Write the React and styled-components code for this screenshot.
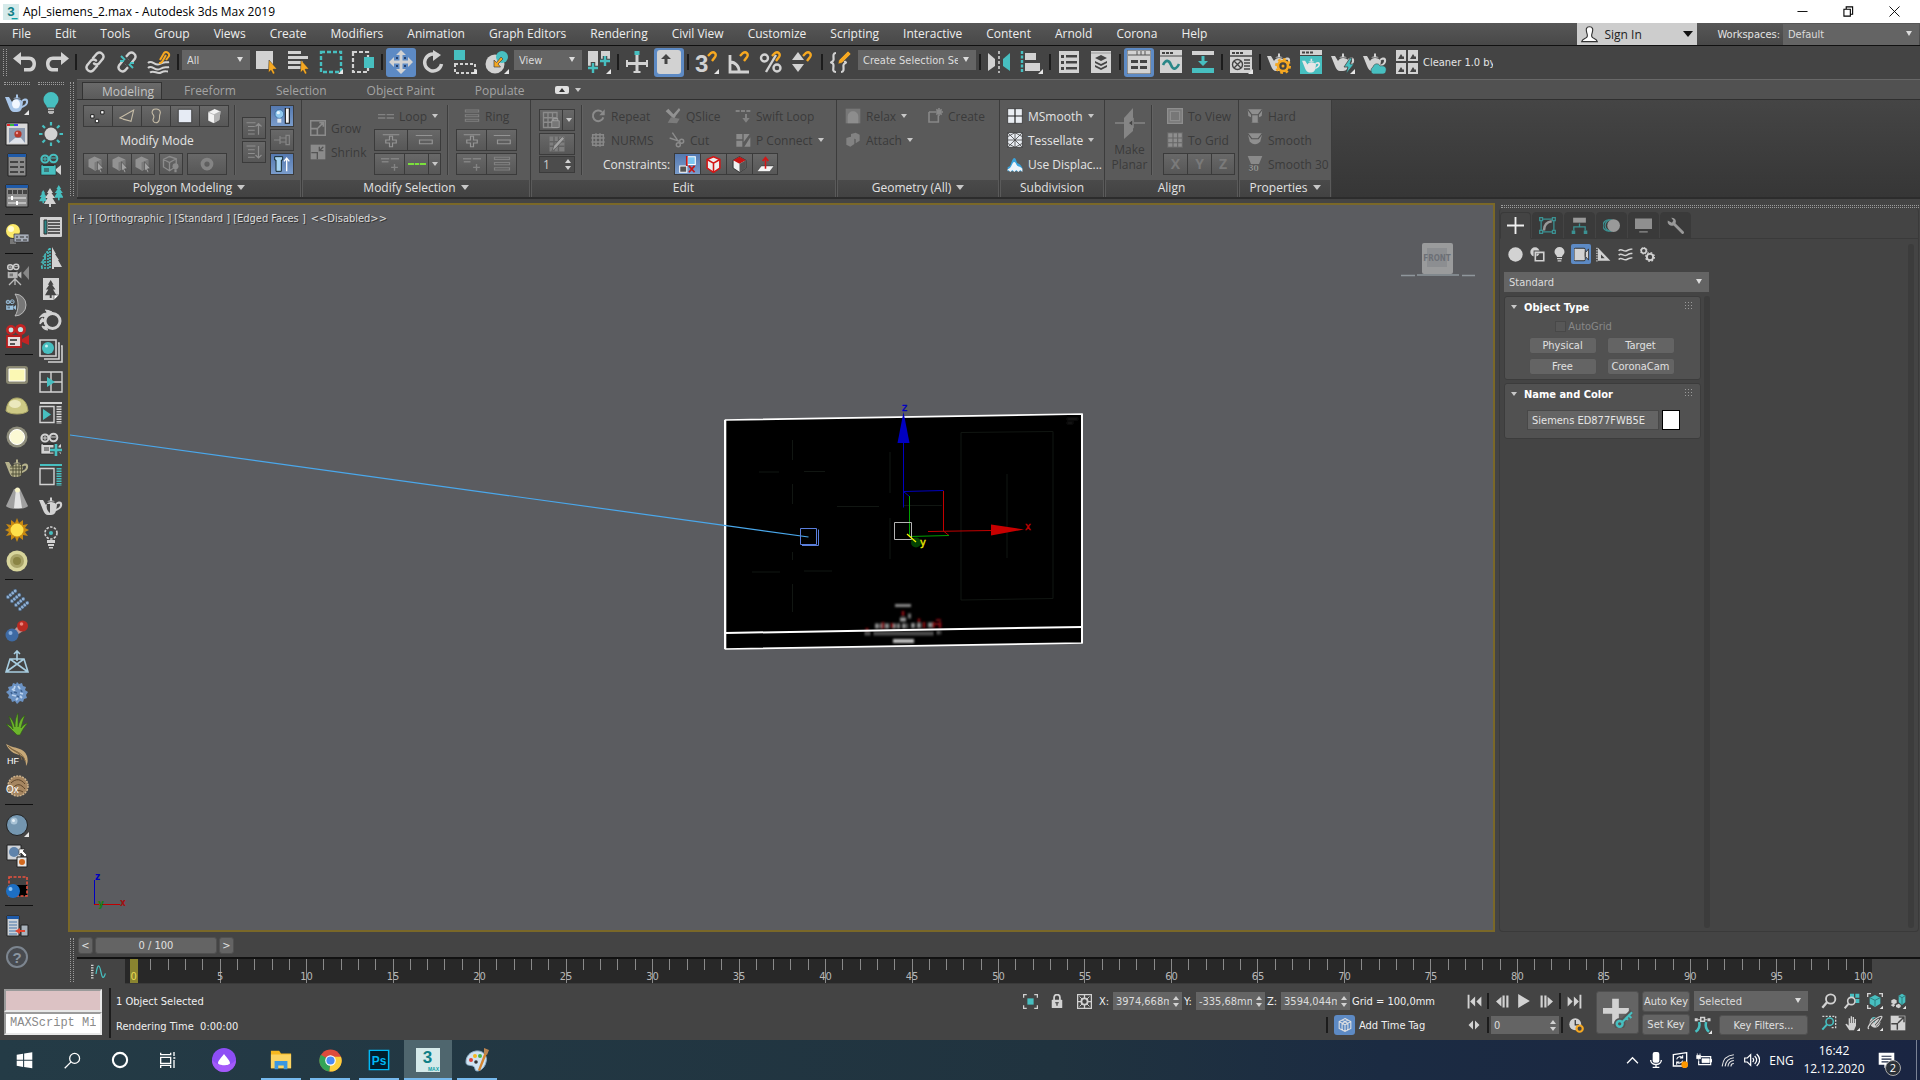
import React from 'react';
import styled, { createGlobalStyle, css } from 'styled-components';

const segoe = "'Open Sans', 'Noto Sans', sans-serif";
const tahoma = "'DejaVu Sans Condensed', 'Noto Sans', sans-serif";

const L = '#d2d2d2';
const T = '#47bfc0';
const Y = '#f6a821';
const D = '#444444';
const G = '#8b8b8b';
const B = '#5d8ac4';

const GlobalStyle = createGlobalStyle`
	* { box-sizing: border-box; }
	body {
		margin: 0;
		background: #444444;
		color: #e4e4e4;
		font: 11px ${tahoma};
	}
	button, input, select {
		font: inherit;
		color: inherit;
		margin: 0;
		padding: 0;
		border: 0;
		background: none;
		border-radius: 0;
	}
	svg { display: block; flex: none; }
`;

/* ---------- icon drawings, 24 x 24 ---------- */

const magnet = (x, y) => (
	<path d={`M${x} ${y + 4}l3-3c3-2 6 1 4 4l-3 4`} fill='none' stroke={Y} strokeWidth='2.4' />
);
const corner = <path d='M24 19v5h-5z' fill='#e6e6e6' />;
const cursor = (x, y) => (
	<path d={`M${x} ${y}l8 9-4 .3 2 4-2 1-2-4-2.6 2.5z`} fill={Y} stroke='#333' strokeWidth='.5' />
);
const teapot = (c) => (
	<g fill={c}>
		<path d='M0 6h4l3 5c1-2 3-3 5-3s5 1 6 3l-1 6c-1 3-3 4-5 4H9c-2 0-4-2-5-5z' />
		<path d='M17 9c4-3 7-1 6 3-1 3-4 4-6 5l0-2c2-1 4-2 4-4s-2-1-4 0z' />
		<path d='M8 7.500c1-1.500 7-1.500 8 0zM11 3.500h2v3h-2z' />
	</g>
);
const camera = (a, b, lens) => (
	<g>
		<circle cx='6' cy='6' r='3.6' fill='none' stroke={b} strokeWidth='2' />
		<circle cx='14.5' cy='5.5' r='3.8' fill='none' stroke={b} strokeWidth='2' />
		<path d='M3 6h6M12 5h5M6 4v4' stroke={b} strokeWidth='1' />
		<path d='M2 12h15v10H2z' fill={a} stroke='#222' strokeWidth='.6' />
		<path d='M4 11h11v2H4z' fill='#333' />
		<path d='M5 15h5v4H5z' fill='#333' opacity='.5' />
		<path d='M17 16l5-4v10l-5-4z' fill={lens} />
	</g>
);
const chain = (c) => (
	<g fill='none' stroke={c} strokeWidth='2.4' strokeLinecap='round'>
		<path d='M10 8l4-4.500a4 4 0 0 1 6 5l-4 5a4 4 0 0 1-5 0' />
		<path d='M14 16l-4 4.500a4 4 0 0 1-6-5l4-5a4 4 0 0 1 5 0' />
	</g>
);
const tree = (x, y, s, c) => (
	<path
		transform={`translate(${x} ${y}) scale(${s})`}
		d='M6 0l3 5H7.500l3.500 5H8.500l3.500 6H7v3H5v-3H0l3.500-6H1l3.500-5H3z'
		fill={c}
	/>
);

const icons = {
	undo: (
		<path d='M0 8.500L8 2v4.500h8c4.500 0 7 3 7 7s-2 8-6 8h-6v-3.500h5c2 0 3.500-2 3.500-4s-1.500-4-3.500-4H8V15z' fill={L} />
	),
	redo: (
		<path d='M24 8.500L16 2v4.500H8c-4.500 0-7 3-7 7s2 8 6 8h6v-3.500H8c-2 0-3.500-2-3.500-4s1.500-4 3.500-4h8V15z' fill={L} />
	),
	link: chain(L),
	unlink: (
		<g>
			{chain(L)}
			<path d='M7 7l10 10' stroke={D} strokeWidth='6' />
			<path d='M6 6l4 4M14 14l4 4M5 11h4M15 13h4' stroke={T} strokeWidth='2' />
		</g>
	),
	bind: (
		<g fill='none' strokeWidth='2'>
			<path d='M1 13c4-4 7 4 12 1s6-1 9-2M1 18c4-4 7 4 12 1s6-1 9-2M3 22.500c4-3 7 2 11 0s5-1 7-1' stroke={L} />
			<path d='M13 10l4-7a3 3 0 0 1 5 3l-3 4M19 5l-4 7a3 3 0 0 1-3 1' stroke={Y} />
		</g>
	),
	select: (
		<g>
			<path d='M1 1h17v18H1z' fill={L} />
			{cursor(14, 10)}
		</g>
	),
	byName: (
		<g>
			<path d='M1 1h13v3H1zM1 6h20v3H1zM1 11h15v3H1zM1 16h13v3H1z' fill={L} />
			{cursor(14, 10)}
		</g>
	),
	rectRegion: (
		<g>
			<path d='M2 2h20v20H2z' fill='none' stroke={T} strokeWidth='2.4' strokeDasharray='4 2' />
			{corner}
		</g>
	),
	crossing: (
		<g>
			<path d='M2 2h15v20H2z' fill='none' stroke={L} strokeWidth='2.2' strokeDasharray='4 2' />
			<path d='M13 7h10v11H13z' fill={T} />
		</g>
	),
	move: (
		<g fill={L}>
			<path d='M12 0l5 5h-3.500v5.500H19V7l5 5-5 5v-3.500h-5.500V19H17l-5 5-5-5h3.500v-5.500H5V17l-5-5 5-5v3.500h5.500V5H7z' />
			<path d='M7 7h2v2H7zM15 7h2v2h-2zM7 15h2v2H7zM15 15h2v2h-2z' fill='#27406b' />
		</g>
	),
	rotate: (
		<g>
			<path d='M17 5.500A8.500 8.500 0 1 0 20.500 14' fill='none' stroke={L} strokeWidth='3.400' />
			<path d='M12 0l8 5-8 6z' fill={L} />
		</g>
	),
	scale: (
		<g>
			<path d='M1 0h11v10H1z' fill={T} />
			<path d='M2 14h20v9H2z' fill='none' stroke={L} strokeWidth='2' strokeDasharray='3 2' />
			{corner}
		</g>
	),
	place: (
		<g>
			<circle cx='10' cy='14' r='9.500' fill={L} />
			<circle cx='17' cy='7' r='6' fill={T} />
			<path d='M9 17v-7l2.500 2.500L16 7l2 2-5 5 2.500 3z' fill={Y} stroke='#444' strokeWidth='.7' />
			{corner}
		</g>
	),
	pivot: (
		<g>
			<path d='M1 1h10v15H1zM14 1h9v12h-9z' fill={L} />
			<path d='M6 12v12M1 18h10M18 6v10M13 11h10' stroke={D} strokeWidth='4.500' />
			<path d='M6 13v10M1 18h10M18 6v10M13 11h10' stroke={T} strokeWidth='2.400' />
			{corner}
		</g>
	),
	manipulate: (
		<g>
			<path d='M10.500 5h3v7H23v3h-9.500v8h-3v-8H1v-3h9.500z' fill={L} />
			<path d='M9.500 1h5v4h-5z' fill={T} />
			<path d='M1 10h2v7H1zM21 10h2v7h-2zM8.500 21h7v2h-7z' fill={L} />
		</g>
	),
	keyboard: (
		<g>
			<rect x='0' y='0' width='24' height='24' rx='3' fill={L} />
			<path d='M9 4l5 5h-3.500v5h-3V9H4z' fill='#444' />
		</g>
	),
	snap: (
		<g>
			<text x='0' y='22' fontSize='24' fontWeight='600' fontFamily='Liberation Sans, sans-serif' fill={L}>3</text>
			{magnet(13, 2)}
			{corner}
		</g>
	),
	angle: (
		<g>
			<path d='M3 5v17h19M3 12a9 9 0 0 1 9 10' fill='none' stroke={L} strokeWidth='2.800' />
			{magnet(13, 2)}
		</g>
	),
	percent: (
		<g>
			<circle cx='5.500' cy='8' r='3.500' fill='none' stroke={L} strokeWidth='2.400' />
			<circle cx='18' cy='18' r='3.500' fill='none' stroke={L} strokeWidth='2.400' />
			<path d='M17 5L7 22' stroke={L} strokeWidth='2.400' />
			{magnet(13, 2)}
		</g>
	),
	spinner: (
		<g>
			<path d='M1 10l6-8 6 8zM1 14l6 8 6-8z' fill={L} />
			{magnet(12, 2)}
		</g>
	),
	braces: (
		<g>
			<path d='M7 3C3 3 5 8 4.500 10S2 12 2 12.500s2.500 0 2.500 3S3 22 7 22M12 22c4 0 2-5 2.500-7S17 13 17 12.500s-2-1-2-2' fill='none' stroke={L} strokeWidth='2.200' />
			<path d='M9 14l1-4 9-9 3 3-9 9z' fill={Y} stroke='#444' strokeWidth='.6' />
		</g>
	),
	mirror: (
		<g>
			<path d='M1 3l7 6v7l-7 5z' fill={L} />
			<path d='M23 3l-7 6v7l7 5z' fill={T} />
			<path d='M12 1v22' stroke={L} strokeWidth='1.600' strokeDasharray='3 2' />
		</g>
	),
	align: (
		<g>
			<path d='M3 1v22' stroke={T} strokeWidth='2.400' strokeDasharray='3 1.500' />
			<path d='M6 3h11v7H6zM6 13h15v8H6z' fill={L} />
			{corner}
		</g>
	),
	explorer: (
		<g>
			<path d='M2 1h20v22H2z' fill={L} />
			<path d='M4 5h3v3H4zM4 11h3v3H4zM4 17h3v3H4zM9 5h11v2.500H9zM9 11h11v2.500H9zM9 17h11v2.500H9z' fill={D} />
		</g>
	),
	layers: (
		<g>
			<path d='M2 1h20v22H2z' fill={L} />
			<path d='M12 5l6 3-6 3-6-3zM6 11l6 3 6-3v2l-6 3-6-3zM6 15l6 3 6-3v2l-6 3-6-3z' fill={D} />
			<path d='M2 3h20' stroke='#999' />
		</g>
	),
	ribbon: (
		<g>
			<path d='M0 0h24v24H0z' fill={L} stroke='#555' />
			<path d='M1 5h22M10 1v4M14 1v4M18 1v4' stroke='#555' />
			<path d='M4 10h7v3H4zM13 10h7v3h-7zM4 16h7v3H4zM13 16h7v3h-7z' fill={D} />
		</g>
	),
	curve: (
		<g>
			<path d='M1 0h22v23H1z' fill={L} />
			<path d='M3 2h3v2H3zM7 2h3v2H7zM11 2h3v2h-3z' fill={D} />
			<path d='M1 6h22' stroke={D} />
			<path d='M4 15c3-6 6-5 8 0s5 5 8-1' fill='none' stroke='#2a8788' strokeWidth='2.600' />
		</g>
	),
	schematic: (
		<g>
			<path d='M1 1h22v4H1z' fill={L} />
			<path d='M1 18h22v5H1zM10.500 6h3v5H17l-5 5-5-5h3.500z' fill={T} />
		</g>
	),
	material: (
		<g>
			<path d='M1 0h22v23H1z' fill={L} />
			<path d='M3 2h3v2H3zM7 2h3v2H7zM11 2h3v2h-3z' fill={D} />
			<path d='M1 6h22M15 10h6M15 13h6M15 16h6M15 19h6' stroke={D} strokeWidth='1.400' />
			<circle cx='8.500' cy='14.500' r='5' fill='none' stroke={D} strokeWidth='1.400' />
			<path d='M5 11l7 7M12 11l-7 7' stroke={D} strokeWidth='1.400' />
			{corner}
		</g>
	),
	renderSetup: (
		<g>
			{teapot(L)}
			<circle cx='16' cy='16' r='5' fill={D} stroke={Y} strokeWidth='2.600' />
			<circle cx='16' cy='16' r='7' fill='none' stroke={Y} strokeWidth='2' strokeDasharray='2.750 2.750' />
			<circle cx='16' cy='16' r='1.500' fill={Y} />
		</g>
	),
	renderFrame: (
		<g>
			<path d='M1 0h22v5H1z' fill={L} />
			<path d='M3 1.500h3v2H3zM7 1.500h3v2H7zM11 1.500h3v2h-3z' fill={D} />
			<path d='M1 6h22v18H1z' fill={T} />
			<g transform='translate(3 6) scale(.78)'>{teapot('#e6e6e6')}</g>
		</g>
	),
	renderProd: (
		<g>
			{teapot(L)}
			<path d='M19 8l-6 9h4l-2 7 8-10h-4l2-6z' fill={T} stroke={D} strokeWidth='.8' />
			{corner}
		</g>
	),
	renderCloud: (
		<g>
			{teapot(L)}
			<path d='M10 24a4 4 0 0 1 0-7c1-4 6-4 7-1 5-1 7 2 6 5 0 2-2 3-3 3z' fill={T} stroke={D} strokeWidth='.6' />
		</g>
	),
	gallery: (
		<g>
			<path d='M1 0h10v11H1zM13 0h10v11H13zM1 13h10v11H1zM13 13h10v11H13z' fill={L} />
			<path d='M3 9l3-5 2 3 1-1v3zM15 9l3-5 2 3 1-1v3zM3 22l3-5 2 3 1-1v3zM15 22l3-5 2 3 1-1v3z' fill={D} />
		</g>
	),

	/* left dock, first column */
	teapotBlue: (
		<g>
			{teapot('#a9c6e8')}
			<ellipse cx='11' cy='13' rx='4' ry='4.500' fill='#f2f7ff' />
			{corner}
		</g>
	),
	vfb: (
		<g>
			<path d='M1 1h22v22H1z' fill='#d9d9d9' stroke='#222' />
			<path d='M2 2h3v2H2z' fill='#d22' /><path d='M5 2h4v2H5z' fill='#3b4' /><path d='M9 2h4v2H9z' fill='#44e' />
			<path d='M4 6h16v15H4z' fill='#8d9bb0' />
			<path d='M4 21l6-5h6l4 5z' fill='#dfe3ea' />
			<circle cx='13' cy='12' r='3.600' fill='#b5392b' />
			<circle cx='12' cy='11' r='1.200' fill='#e99' />
		</g>
	),
	dialog: (
		<g>
			<path d='M3 1h18v22H3z' fill='#8c8c8c' stroke='#222' />
			<path d='M3 1h18v3H3z' fill='#1f5aa8' />
			<path d='M5 8h8v2H5zM5 13h8v2H5zM5 18h8v2H5zM15 8h4v2h-4zM15 13h4v2h-4zM15 18h4v2h-4z' fill='#444' />
		</g>
	),
	mixer: (
		<g>
			<path d='M1 1h22v22H1z' fill='#8c8c8c' stroke='#222' />
			<path d='M1 1h22v3H1z' fill='#1f5aa8' />
			<path d='M3 6h4v4H3zM8 6h4v4H8zM13 6h4v4h-4zM18 6h4v4h-4z' fill='#444' />
			<path d='M3 14h18M3 19h18' stroke='#eee' />
			<path d='M7 12v4M12 17v4' stroke='#fff' strokeWidth='2' />
		</g>
	),
	lightLister: (
		<g>
			<circle cx='8' cy='8' r='7' fill='#fbe96a' />
			<circle cx='6' cy='6' r='3' fill='#fffbd0' />
			<path d='M5 16h6v5H5z' fill='#777' />
			<path d='M9 11h15v8H9z' fill='#a6adb8' stroke='#333' strokeWidth='.7' />
			<path d='M11 14h2M15 14h4M21 14h2M11 17h5M18 17h4' stroke='#333' />
		</g>
	),
	cameraGrey: (
		<g>
			<g transform='translate(1 1) scale(.7)'>{camera('#b8b8b8', '#ccc', '#b8b8b8')}</g>
			<path d='M24 4v14l-6-7z' fill='#888' />
			<path d='M4 23l6-6 6 6M10 16v7' fill='none' stroke='#bbb' strokeWidth='1.300' />
		</g>
	),
	cameraHalf: (
		<g>
			<path d='M10 1a11 11 0 1 1 0 22c4-6 4-16 0-22z' fill='#777' stroke='#ccc' strokeWidth='.8' />
			<g transform='translate(0 6) scale(.5)'>{camera('#9cc3e0', '#9cc3e0', '#9cc3e0')}</g>
		</g>
	),
	cameraRed: (
		<g>
			<circle cx='6' cy='6' r='5' fill='#c22424' />
			<circle cx='15.500' cy='5.500' r='5.500' fill='#c22424' />
			<circle cx='6' cy='6' r='2.400' fill='#bfe6e6' />
			<circle cx='15.500' cy='5.500' r='2.600' fill='#bfe6e6' />
			<path d='M2 12h14v11H2z' fill='#e6dada' stroke='#b51d1d' strokeWidth='1.800' />
			<path d='M5 15h7v2H5zM5 19h5v2H5z' fill='#555' />
			<path d='M17 15l7-4v10l-7-3z' fill='#c22424' />
		</g>
	),
	lightRect: (
		<g>
			<rect x='1' y='3' width='22' height='18' rx='3' fill='#8a8872' />
			<path d='M4 6h16v12H4z' fill='#fbf8b4' stroke='#fff' />
		</g>
	),
	lightDome: (
		<g>
			<path d='M1 17C2 7 7 4 12 4s10 3 11 13c-4 4-18 4-22 0z' fill='#cdc985' stroke='#a9a566' />
			<ellipse cx='10' cy='10' rx='6' ry='4' fill='#ebe8bd' />
		</g>
	),
	lightSphere: (
		<g>
			<circle cx='12' cy='12' r='10.500' fill='#8f8e7d' />
			<circle cx='12' cy='12' r='7.500' fill='#fbf9d4' stroke='#fff' />
		</g>
	),
	teapotMesh: (
		<g>
			{teapot('#b6b28c')}
			<path d='M5 11h13M5 14h13M6 18h11M8 8v13M11 8v13M14 8v13M16.500 9v10' stroke='#4b4933' strokeWidth='.9' />
		</g>
	),
	lightSpot: (
		<g>
			<path d='M9 2h6l8 17c-3 4-19 4-22 0z' fill='#a0a0a0' />
			<path d='M11 2h3l3 19H9z' fill='#e4e4e4' />
			<circle cx='12.500' cy='3' r='2.500' fill='#f8f4c8' />
		</g>
	),
	sunYellow: (
		<g>
			<path d='M12 0l2 5 4-3v5l5-1-3 4 4 2-4 2 3 4-5-1v5l-4-3-2 5-2-5-4 3v-5l-5 1 3-4-4-2 4-2-3-4 5 1V2l4 3z' fill='#c88a12' />
			<circle cx='12' cy='12' r='6.500' fill='#ffe14a' />
		</g>
	),
	halo: (
		<g>
			<circle cx='12' cy='12' r='10.500' fill='#d8d59c' />
			<circle cx='12' cy='12' r='7' fill='#a9a469' />
			<circle cx='12' cy='12' r='4' fill='#8a8444' />
		</g>
	),
	particles: (
		<g fill='#8fb0d4' stroke='#33475e' strokeWidth='.6'>
			{[0, 1, 2, 3].map((r) =>
				[0, 1, 2, 3].map((c) => (
					<circle key={`${r}${c}`} cx={3 + c * 4 + r * 2.400} cy={9 + c * 4 - r * 2} r='1.900' />
				))
			)}
		</g>
	),
	metaballs: (
		<g>
			<path d='M8 12l8-8 5 6-9 6z' fill='#b99' />
			<circle cx='7' cy='16' r='6.500' fill='#3e6aa3' />
			<circle cx='5.500' cy='14' r='2' fill='#8db2df' />
			<circle cx='17.500' cy='7' r='5.500' fill='#b92b23' />
			<circle cx='16.500' cy='5' r='1.800' fill='#ec8279' />
		</g>
	),
	lattice: (
		<path d='M12 11V1m-3 3l3-3 3 3M5 9h14l4 13H1zM5 9l18 13M19 9L1 22' fill='none' stroke='#a8cde0' strokeWidth='1.600' />
	),
	fur: (
		<g>
			<path d='M12 1l2 2 3-1 1 3 3 1-1 3 3 2-2 3 1 3-3 1-1 3-3-1-3 3-2-3-3 1-1-3-3-1 1-3-3-3 3-2-1-3 4-1 1-3 3 1z' fill='#6c93c4' />
			<path d='M7 8l3 2M13 5l2 3M7 14l4 1M15 12l3 1M11 19l2-2M10 5l-1 3M17 17l-2-2' stroke='#bcd3ee' strokeWidth='1.800' />
			<path d='M9 11l3 1M16 9l1 2M12 15l2 1M6 11l1 2' stroke='#3d618f' strokeWidth='1.600' />
		</g>
	),
	grass: (
		<path d='M12 23C8 19 4 15 1 12c4 1 6 3 7 5C7 12 5 8 4 4c3 3 5 7 6 11C10 9 11 4 13 1c0 5 0 9 0 14 1-5 3-9 7-12-2 5-3 9-4 13 2-3 4-4 7-5-4 4-6 8-8 12z' fill='#6cb52c' stroke='#2f5a14' strokeWidth='.6' />
	),
	hair: (
		<g>
			<path d='M1 1c8 5 18 3 21 12 1 4 1 7-1 10 0-7-2-9-6-11C9 11 4 8 1 1z' fill='#c7a877' />
			<path d='M4 4c6 5 14 5 16 14M3 3c8 8 12 5 14 14' fill='none' stroke='#7d6440' />
			<text x='2' y='21' fontSize='9' fontFamily='Liberation Sans, sans-serif' fill='#fff'>HF</text>
		</g>
	),
	ornatrix: (
		<g>
			<circle cx='13' cy='12' r='10' fill='#a58560' stroke='#d0b48c' strokeWidth='1.500' strokeDasharray='2 1' />
			<path d='M6 9c5-5 10-4 14 1M8 14c4-5 8-4 12 1M10 18c2-2 5-2 8 0' fill='none' stroke='#5d452c' />
			<text x='1' y='19' fontSize='10' fontFamily='Liberation Sans, sans-serif' fill='#fff'>Ox</text>
		</g>
	),
	sphere: (
		<g>
			<circle cx='12' cy='12' r='10.500' fill='#7496b0' stroke='#222' />
			<circle cx='9' cy='8' r='3.500' fill='#a9c3d6' />
			<circle cx='8.500' cy='7.500' r='1.500' fill='#e6f0f7' />
			{corner}
		</g>
	),
	matConvert: (
		<g>
			<path d='M2 1h14v15H2z' fill='#cfd3d8' stroke='#222' />
			<circle cx='9' cy='8' r='5' fill='#5f83ab' />
			<path d='M12 13h10v10H12z' fill='#e6e6e6' stroke='#222' />
			<circle cx='17' cy='18' r='3' fill='#d2691e' />
			<path d='M14 5h6l-2 2 4 4-2 2-4-4-2 2z' fill='#fff' stroke='#222' strokeWidth='.6' />
		</g>
	),
	regionSphere: (
		<g>
			<path d='M11 10h11v11H11z' fill='#000' />
			<path d='M4 2h18v19H4z' fill='none' stroke='#e8523f' strokeWidth='1.600' strokeDasharray='3 1.500' />
			<circle cx='8' cy='16' r='7' fill='#1d6fc4' />
			<circle cx='5.500' cy='14' r='2' fill='#8cc2f2' />
		</g>
	),
	transfer: (
		<g>
			<path d='M2 2h12v20H2z' fill='#ccd2d8' stroke='#222' />
			<path d='M2 2h12v3H2z' fill='#1f5aa8' />
			<path d='M4 8h8M4 11h8M4 14h8M4 17h8M4 20h8' stroke='#4774a8' />
			<path d='M16 11h7v11h-7z' fill='#aab4be' stroke='#222' />
			<path d='M10 17l5-3v2h5v2h-5v2z' fill='#e2452f' />
		</g>
	),
	help: (
		<g>
			<circle cx='12' cy='12' r='10' fill='#484b50' stroke='#7c858f' strokeWidth='2' />
			<text x='12' y='17.500' fontSize='15' fontWeight='bold' textAnchor='middle' fontFamily='Liberation Sans, sans-serif' fill='#8a95a0'>?</text>
		</g>
	),

	/* left dock, second column */
	bulb: (
		<g>
			<path d='M12 1a7.500 7.500 0 0 1 7.500 7.500c0 4-3 5-3.500 8H8c-.5-3-3.500-4-3.500-8A7.500 7.500 0 0 1 12 1z' fill={T} />
			<path d='M9 17.500h6v4l-1.500 1.500h-3L9 21.500z' fill='#b8b8b8' />
			<path d='M9 19.500h6' stroke='#555' />
		</g>
	),
	sun: (
		<g>
			<circle cx='12' cy='12' r='6.500' fill={L} />
			<path d='M12 0v3.500M12 20.500V24M0 12h3.500M20.500 12H24M3.500 3.500L6 6M18 18l2.500 2.500M20.500 3.500L18 6M6 18l-2.500 2.500' stroke={T} strokeWidth='2.200' />
		</g>
	),
	cameraTeal: camera(T, T, L),
	trees: (
		<g>
			{tree(0, 6, 0.7, T)}
			{tree(15, 1, 0.8, T)}
			{tree(5, 4, 1, L)}
		</g>
	),
	lister: (
		<g>
			<rect x='1' y='2' width='22' height='20' rx='1' fill={L} />
			<path d='M5 5h3v14H5z' fill='#2a8788' stroke='#333' />
			<path d='M9 6h12M9 9h12M9 12h12M9 15h12M9 18h12' stroke='#333' strokeWidth='1.600' />
		</g>
	),
	treeHalf: (
		<g>
			<path d='M11 2v20H2l3-6H3l4-6H5z' fill='none' stroke={T} strokeWidth='1.600' strokeDasharray='2 1' />
			<path d='M9 6v14M6 12v8' fill='none' stroke={T} strokeWidth='1.600' strokeDasharray='2 1' />
			<path d='M13 1l4 7h-1l4 6h-1l4 7h-8v2h-2z' fill={L} />
		</g>
	),
	treeCard: (
		<g>
			<path d='M4 1h16v17l-5 5H4z' fill={L} />
			{tree(6, 3, 0.95, D)}
			<path d='M15 23v-5h5z' fill='#fff' stroke={D} strokeWidth='.6' />
		</g>
	),
	ringSplash: (
		<g>
			<circle cx='13.500' cy='13' r='7.500' fill='none' stroke={L} strokeWidth='3' />
			<path d='M7 9C5 8 3 8 1 9c2-3 4-4 7-4 0-2-1-3-2-3 3 0 5 1 7 2M6 13c-2 0-4 1-5 3 0-3 1-5 3-6M8 18c-2 1-4 1-5 0 1 2 3 4 6 4' fill={L} stroke={L} strokeWidth='1.200' />
		</g>
	),
	sphereStack: (
		<g>
			<path d='M1 1h16v16H1z' fill={D} stroke={L} strokeWidth='1.600' />
			<path d='M19 4h1v16H5M22 7h1v16H9' fill='none' stroke={L} strokeWidth='1.600' />
			<circle cx='9' cy='9' r='6' fill={T} />
			<circle cx='7.500' cy='7' r='1.500' fill='#c5f0f0' />
		</g>
	),
	gridPlay: (
		<g>
			<path d='M1 2h22v20H1zM12 2v20M1 12h22' fill='none' stroke={L} strokeWidth='1.400' />
			<path d='M8 7l8 5-8 5z' fill={T} />
		</g>
	),
	panelPlay: (
		<g>
			<path d='M1 2h22' stroke={L} strokeWidth='2' />
			<path d='M1 5.500h14v16H1z' fill='none' stroke={L} strokeWidth='1.400' />
			<path d='M4 8l8 5.500L4 19z' fill={T} />
			<path d='M20 5v18' stroke={L} strokeWidth='5' strokeDasharray='1.500 1' />
		</g>
	),
	cameraPlus: (
		<g>
			{camera(L, L, L)}
			<path d='M17 12v12M11 18h12' stroke={D} strokeWidth='5' />
			<path d='M17 12v12M11 18h12' stroke={T} strokeWidth='2.600' />
		</g>
	),
	panel: (
		<g>
			<path d='M1 2h22' stroke={T} strokeWidth='2' />
			<path d='M1 5.500h14v16H1z' fill='none' stroke={L} strokeWidth='1.400' />
			<path d='M20 5v18' stroke={T} strokeWidth='5' strokeDasharray='1.500 1' />
		</g>
	),
	teapotHalf: (
		<g>
			{teapot(L)}
			<path d='M11 10H8c-1 3 0 7 3 9z' fill={D} />
		</g>
	),
	bulbDots: (
		<g>
			<circle cx='12' cy='8' r='6' fill='none' stroke={L} strokeWidth='1.600' strokeDasharray='2.500 1.300' />
			<circle cx='12' cy='8' r='2' fill={T} />
			<path d='M8 15h8v3H8zM9 19h6v2H9zM10 22h4v1.500h-4z' fill={L} />
		</g>
	),

	/* ribbon */
	vertex: <path d='M1 10h5v5H1zM16 4h5v5h-5zM8 17h5v5H8z' fill='#fff' stroke='#222' strokeWidth='1.500' />,
	edge: <path d='M1 15L22 3l-4 17zM6 17l12 3' fill='none' stroke='#c8bea8' strokeWidth='1.600' />,
	border: <path d='M9 2c6-2 11 2 9 7s1 9-3 12-9-1-7-5 1-4-1-7 0-6 2-7z' fill='none' stroke='#c8bea8' strokeWidth='1.600' />,
	polygon: <path d='M2 2h20v20H2z' fill='#e6ebf4' stroke='#222' />,
	element: (
		<g>
			<path d='M13 1l9 4-2 13-9 5-8-4V6z' fill='#f2f2f2' stroke='#444' strokeWidth='.6' />
			<path d='M12 10v13l8-5 2-13z' fill='#b3b3b3' />
			<path d='M3 6l9 4 10-5' fill='none' stroke='#aaa' />
		</g>
	),
	cube: (
		<g>
			<path d='M10 2l9 4v11l-8 4-9-5V6z' fill='#929292' />
			<path d='M10 10v11l9-4V6z' fill='#7b7b7b' />
			<path d='M14 9l8 9-4 .5 2 4-2 1-2-4-2 2z' fill='#a2a2a2' stroke='#4a4a4a' strokeWidth='.8' />
		</g>
	),
	cubeWire: (
		<g>
			<path d='M10 2l9 3v10l-9 6-8-5V6zM2 6l8 4 9-5M10 10v11' fill='none' stroke={G} strokeWidth='1.800' />
			<circle cx='18' cy='15' r='4' fill={G} />
			<path d='M16.500 19h3v4h-3z' fill={G} />
		</g>
	),
	soft: <circle cx='12' cy='12' r='6' fill='none' stroke='#848484' strokeWidth='5' />,
	stackUp: <path d='M2 5h12M4 10h9M4 15h9M4 20h9M18 21V6m-4 4l4-4 4 4' fill='none' stroke='#8d8d8d' strokeWidth='1.600' />,
	stackDown: <path d='M2 4h12M4 9h9M4 14h9M4 19h9M18 4v16m-4-4l4 4 4-4' fill='none' stroke='#8d8d8d' strokeWidth='1.600' />,
	showEnd: (
		<g>
			<circle cx='8' cy='9' r='6.500' fill='#8fc8ee' stroke='#2b5f96' />
			<circle cx='6.500' cy='7' r='2.500' fill='#e4f4ff' />
			<path d='M5 16h6v6H5z' fill='#dfe8f0' />
			<path d='M17 0h6v23h-6z' fill='#f4f4f4' stroke='#111' strokeWidth='1.600' />
		</g>
	),
	pin: <path d='M0 12h9M9 6v12M9 9h9M9 15h9M18 5v14h5V5z' fill='none' stroke='#858585' strokeWidth='1.800' />,
	preview: (
		<g>
			<path d='M1 1h12v5h-2v17H3V6H1z' fill='#a6d4f2' stroke='#122' strokeWidth='1.400' />
			<path d='M19 23V3m-4 5l4-5 4 5' fill='none' stroke='#fff' strokeWidth='2' />
		</g>
	),
	grow: <path d='M1 1h22v22H1zM2 13h9v10M12 12l8-8m-6 0h6v6' fill='none' stroke={G} strokeWidth='2.400' />,
	shrink: (
		<g>
			<path d='M1 1h22v22H1z' fill={G} />
			<path d='M2 13h9v10M20 4l-6 6m0-6v6h6' fill='none' stroke='#555' strokeWidth='2' />
		</g>
	),
	loop: <path d='M0 9h11v2H0zM13 9h11v2H13zM0 14h11v2H0zM13 14h11v2H13z' fill='#828282' />,
	loopGreen: <path d='M0 12h8M9 12h6M16 12h8' stroke='#7be03c' strokeWidth='2.400' />,
	plus: <path d='M1 5h22M10 7h4v5h5v4h-5v5h-4v-5H5v-4h5z' fill='none' stroke='#949494' strokeWidth='1.600' />,
	minus: <path d='M1 6h22M6 12h17v5H6z' fill='none' stroke='#949494' strokeWidth='1.600' />,
	dots: <path d='M0 5h11M13 5h11M1 9h9M18 12v9M13.500 16.500h9' stroke='#838383' strokeWidth='1.800' />,
	ring: <path d='M2 3h20v3H2zM2 10h20v3H2zM2 17h20v3H2z' fill='none' stroke='#808080' strokeWidth='1.600' />,
	gridLock: (
		<g>
			<path d='M2 2h18v20H2zM8 2v20M14 2v20M2 9h18M2 15h18' fill='none' stroke={G} strokeWidth='1.800' />
			<path d='M13 13h10v9H13zM15 13v-3h6v3' fill='#777' stroke='#a5a5a5' />
		</g>
	),
	gridBrush: (
		<g>
			<path d='M2 2h20v20H2z' fill='#7e7e7e' />
			<path d='M8 2v20M14 2v20M2 9h20M2 15h20' fill='none' stroke='#626262' strokeWidth='1.800' />
			<path d='M5 22l3-8L19 2l3 3-11 12z' fill='#a2a2a2' stroke='#555' />
		</g>
	),
	repeat: (
		<g>
			<path d='M18 6a8 8 0 1 0 2 8' fill='none' stroke={G} strokeWidth='3' />
			<path d='M22 2v9h-8z' fill={G} />
		</g>
	),
	nurms: <path d='M4 4h16v16H4zM9 2v20M15 2v20M2 9h20M2 15h20' fill='none' stroke='#888' strokeWidth='2.200' />,
	knife: (
		<g>
			<path d='M1 5L5 1l11 12-3 3zM12 10L21 0l2 3-8 10z' fill='#929292' />
			<path d='M9 14l13 2-4 7-14-1z' fill='#7b7b7b' />
		</g>
	),
	scissors: (
		<g fill='none' stroke='#8b8b8b' strokeWidth='2.200'>
			<path d='M5 1l9 13M1 9l15 5' />
			<circle cx='19' cy='14' r='3' />
			<circle cx='14' cy='19' r='3' />
		</g>
	),
	swift: <path d='M1 3h6v3H1zM9 3h6v3H9zM17 3h6v3h-6zM15 9h3v6h4l-5.500 7-5.500-7h4z' fill='#828282' />,
	pconnect: <path d='M2 3h9v8H2zM2 13h9v9H2zM13 3h9L13 15zM14 22l9-14v14z' fill={G} />,
	constraintNone: (
		<g>
			<path d='M12 1h11v11H12z' fill='#7cc6f2' stroke='#fff' strokeWidth='1.500' />
			<path d='M1 14h10v9H1z' fill='#555' stroke='#fff' strokeWidth='1.500' />
			<path d='M11 0v14M14 14l8 9M22 14l-8 9' stroke='#c41616' strokeWidth='2.400' />
		</g>
	),
	constraintEdge: (
		<g>
			<path d='M12 1l9 4v12l-9 6-9-6V5z' fill='#eee' stroke='#d41616' strokeWidth='2.200' />
			<path d='M3 5l9 5 9-5M12 10v13' fill='none' stroke='#d41616' strokeWidth='2.200' />
		</g>
	),
	constraintFace: (
		<g>
			<path d='M12 1l9 5v11l-9 6-9-6V6z' fill='#f0f0f0' stroke='#111' />
			<path d='M12 1l9 5-9 5-9-5z' fill='#c81414' />
			<path d='M12 11v12l9-6V6z' fill='#555' />
		</g>
	),
	constraintNormal: (
		<g>
			<path d='M6 14h18l-6 8H0z' fill='#f5f5f5' stroke='#222' strokeWidth='.6' />
			<path d='M12 18V2m-4 5l4-5 4 5' fill='none' stroke='#d41616' strokeWidth='2.200' />
		</g>
	),
	relax: (
		<g>
			<path d='M1 1h22v22H1z' fill='#777' />
			<path d='M4 23V13c0-5 4-8 8-8s8 3 8 8v10z' fill='#8d8d8d' />
		</g>
	),
	attach: <path d='M9 3l7-2 6 3v9l-6 4v-6l-7-3zM2 9l6-2 6 3v8l-6 4-6-3z' fill='#828282' />,
	create: <path d='M3 6h11M3 6v15h14V11M18 0v12M12 6h12M14 2l8 8M22 2l-8 8' fill='none' stroke='#888' strokeWidth='2.400' />,
	msmooth: (
		<g>
			<path d='M1 1h22v22H1z' fill='#e9edf2' stroke='#222' />
			<path d='M12 1v22M1 12h22' stroke='#222' strokeWidth='1.800' />
		</g>
	),
	tessellate: (
		<g>
			<path d='M1 1h22v22H1z' fill='#e9edf2' stroke='#222' />
			<path d='M12 1v22M1 12h22M1 1l22 22M23 1L1 23M1 7l11-6 11 6M1 17l11 6 11-6' fill='none' stroke='#444' strokeWidth='1.200' />
		</g>
	),
	displace: (
		<g>
			<path d='M1 17c2-1 3-1 4-3s3-11 6-11 3 7 5 8 5 2 7 7v5H1z' fill='#3aa3dc' />
			<path d='M1 20c3-1 4-2 6-6s2-5 4-5 3 5 5 6 4 1 7 4v5l-3-3-3 3-3-3-3 3-3-3-3 3-3-3-1 2z' fill='#eef4fa' />
		</g>
	),
	toView: <path d='M1 1h22v22H1zM5 5h14v14H5z' fill='#777' stroke='#8e8e8e' strokeWidth='2' />,
	toGrid: <path d='M1 1h22v22H1zM9 1v22M16 1v22M1 9h22M1 16h22' fill='#8e8e8e' stroke='#666' strokeWidth='1.600' />,
	hard: (
		<g>
			<path d='M1 2h22l-1 10-4 2v8H6v-8l-4-2z' fill='#8f8f8f' />
			<path d='M1 2l6 8h10l6-8M7 10v12M17 10v12' fill='none' stroke='#555' strokeWidth='1.600' />
		</g>
	),
	smooth: (
		<g>
			<path d='M1 2h22l-3 12c-4 6-12 6-16 0z' fill='#8f8f8f' />
			<path d='M1 2l6 8h10l6-8' fill='none' stroke='#555' strokeWidth='1.600' />
		</g>
	),
	smooth30: (
		<g>
			<path d='M1 0h22l-5 12H6z' fill='#8a8a8a' />
			<text x='2' y='23' fontSize='14' fontWeight='bold' fontFamily='Liberation Sans, sans-serif' fill='#b0b0b0' stroke='#444' strokeWidth='.5'>30</text>
		</g>
	),

	/* command panel */
	tabCreate: <path d='M12 0v24M0 12h24' stroke='#f0f0f0' strokeWidth='2.600' />,
	tabModify: (
		<g fill='none' strokeWidth='1.800'>
			<path d='M3 3h18v18H3z' stroke='#3b9293' />
			<path d='M1 1h4v4H1zM19 1h4v4h-4zM1 19h4v4H1zM19 19h4v4h-4z' fill='#3a3a3a' stroke='#3b9293' />
			<path d='M7 19C7 12 11 7 18 6' stroke='#999' strokeWidth='3.600' />
		</g>
	),
	tabHierarchy: (
		<g>
			<path d='M3 1h18v7H3z' fill='#999' />
			<path d='M12 9v5M4 19v-5h16v5' fill='none' stroke='#3b9293' strokeWidth='1.800' />
			<path d='M1 19h5v5H1zM18 19h5v5h-5z' fill='#3b9293' />
		</g>
	),
	tabMotion: (
		<g>
			<circle cx='8' cy='12' r='8' fill='none' stroke='#3b9293' strokeWidth='1.600' />
			<circle cx='11' cy='12' r='8' fill='#3a3a3a' stroke='#3b9293' strokeWidth='1.600' />
			<circle cx='15' cy='12' r='9' fill='#999' />
		</g>
	),
	tabDisplay: <path d='M0 2h24v15H0zM6 20h12v2H6z' fill='#8f8f8f' />,
	tabUtil: (
		<g>
			<path d='M10 10l12 12' stroke='#999' strokeWidth='4' strokeLinecap='round' />
			<path d='M1 5a6 6 0 0 0 8 7 6 6 0 0 0 3-8 6 6 0 0 0-6-3l3 4-2 3z' fill='#999' />
		</g>
	),
	geo: <circle cx='12' cy='12' r='11.500' fill={L} />,
	shapes: (
		<g>
			<circle cx='8' cy='8' r='7.500' fill={L} />
			<path d='M8 8h14v14H8z' fill='none' stroke='#444' strokeWidth='4.500' />
			<path d='M8.500 8.500h13.500v13.500H8.500z' fill='none' stroke={L} strokeWidth='2.600' />
		</g>
	),
	lights: (
		<g>
			<path d='M12 0a8 8 0 0 1 8 8c0 4-4 5-4 8H8c0-3-4-4-4-8a8 8 0 0 1 8-8z' fill={L} />
			<path d='M8 18.500h8M9 22h6' stroke={L} strokeWidth='2' />
		</g>
	),
	cams: (
		<g>
			<rect x='0' y='2' width='18' height='20' rx='2' fill={L} stroke='#333' strokeWidth='1.600' />
			<path d='M18 9l5.500-6v18L18 15z' fill={L} stroke='#333' strokeWidth='1.600' />
		</g>
	),
	helpers: (
		<g>
			<path d='M3 1l20 21H3zM8 12v6h6z' fill={L} fillRule='evenodd' />
			<path d='M1.500 1v22' stroke={L} strokeWidth='2' strokeDasharray='2 2' />
		</g>
	),
	warps: <path d='M1 6c5-5 8 3 13 0s6-2 9-3M1 13c5-5 8 3 13 0s6-2 9-3M1 20c5-5 8 3 13 0s6-2 9-3' fill='none' stroke={L} strokeWidth='2.400' />,
	systems: (
		<g fill='none' stroke={L}>
			<circle cx='6' cy='6' r='4' strokeWidth='2.500' />
			<circle cx='16' cy='16' r='5' strokeWidth='3' />
			<circle cx='16' cy='16' r='7' strokeWidth='2' strokeDasharray='2.800 2.700' />
			<circle cx='6' cy='6' r='5.400' strokeWidth='1.500' strokeDasharray='2 2.200' />
		</g>
	),

	/* status bar */
	isolate: (
		<g>
			<path d='M1 6V1h5M18 1h5v5M23 18v5h-5M6 23H1v-5' fill='none' stroke={L} strokeWidth='2' />
			<path d='M7 7h10v10H7z' fill={T} />
		</g>
	),
	lock: (
		<g>
			<path d='M7 11V6a5 5 0 0 1 10 0v5' fill='none' stroke={L} strokeWidth='3' />
			<rect x='3' y='10' width='18' height='14' rx='1' fill={L} />
			<path d='M11 14h2v6h-2zM9 14h6v2H9z' fill='#333' />
		</g>
	),
	absolute: (
		<g fill='none' stroke={L}>
			<path d='M1 1h22v22H1z' strokeWidth='2' />
			<circle cx='12' cy='12' r='5' strokeWidth='3' />
			<path d='M12 1v6M12 17v6M1 12h6M17 12h6' strokeWidth='2' />
			<path d='M4 4l4 4M20 4l-4 4M4 20l4-4M20 20l-4-4' strokeWidth='1.500' />
		</g>
	),
	timeTag: <path d='M12 1l10 5v12l-10 5-10-5V6zM2 6l10 6 10-6M12 12v11M7 3.500l10 6v11M17 3.500l-10 6v11' fill='none' stroke='#e2e2e2' strokeWidth='1.800' />,
	goStart: <path d='M1 1h3v22H1zM13 4v16L5 12zM23 4v16l-8-8z' fill={L} />,
	prev: <path d='M10 3v18L0 12zM12 1h4v22h-4zM19 1h4v22h-4z' fill={L} />,
	play: <path d='M2 0l20 12L2 24z' fill={L} />,
	next: <path d='M14 3v18l10-9zM1 1h4v22H1zM8 1h4v22H8z' fill={L} />,
	goEnd: <path d='M20 1h3v22h-3zM11 4v16l8-8zM1 4v16l8-8z' fill={L} />,
	keyMode: <path d='M10 3v18L1 12zM14 3v18l9-9z' fill={L} />,
	timeCfg: (
		<g>
			<circle cx='10' cy='10' r='9.500' fill={L} />
			<path d='M10 3v8h6' fill='none' stroke='#333' strokeWidth='2' />
			<circle cx='17' cy='17' r='5' fill='#444' stroke={Y} strokeWidth='3.500' />
		</g>
	),
	tangents: (
		<g fill='none' strokeWidth='2.600'>
			<path d='M2 21c5-3 6-8 5-13M20 21c-4-3-5-8-4-13' stroke={T} strokeWidth='3.400' />
			<path d='M9 2h5v5H9z' stroke={L} strokeWidth='2' />
			<path d='M1 3h4v4H1zM18 3h4v4h-4z' fill={L} stroke='none' />
			<path d='M5 5h4M14 5h4' stroke={L} strokeWidth='1.400' />
			{corner}
		</g>
	),
	bigPlus: (
		<g>
			<path d='M11 1h8v11h12v7H19v12h-8V19H0v-7h11z' fill={L} />
			<circle cx='20' cy='31' r='3.500' fill='none' stroke='#555' strokeWidth='7' />
			<path d='M35 16L22 29' stroke='#555' strokeWidth='6' fill='none' />
			<circle cx='20' cy='31' r='3.500' fill='none' stroke={T} strokeWidth='3' />
			<path d='M35 17L23 29m7-9l4 4m-7-1l3 3' stroke={T} strokeWidth='2.600' fill='none' />
		</g>
	),
	zoom: (
		<g>
			<circle cx='14.500' cy='9' r='7' fill='none' stroke={L} strokeWidth='2.800' />
			<path d='M9 14l-7 8' stroke={L} strokeWidth='3.600' />
		</g>
	),
	zoomAll: (
		<g>
			<path d='M9 1h6v6H9zM17 1h6v6h-6zM17 9h6v6h-6z' fill={T} />
			<circle cx='11' cy='12' r='5.500' fill='#444' stroke={L} strokeWidth='2.400' />
			<path d='M7 16l-6 7' stroke={L} strokeWidth='3' />
		</g>
	),
	extents: (
		<g>
			<path d='M1 6V1h5M18 1h5v5M6 23H1v-5' fill='none' stroke={L} strokeWidth='2' />
			<path d='M12 3l8 4v9l-8 5-8-5V7z' fill={T} />
			<path d='M4 7l8 4 8-4M12 11v9' fill='none' stroke='#2b7b7c' strokeWidth='1.400' />
			{corner}
		</g>
	),
	extentsAll: (
		<g>
			<path d='M13 4l5-3 5 3v10l-5 4-5-4z' fill={T} />
			<path d='M13 4l5 3 5-3M18 7v11' fill='none' stroke='#2b7b7c' strokeWidth='1.400' />
			<path d='M6 9l4 2v4l-4 2-4-2v-4zM1 18l4-2 3 2-3 3zM9 18l4-2 3 2v3l-3 2-4-2z' fill={L} />
			{corner}
		</g>
	),
	zoomRegion: (
		<g>
			<path d='M2 2h20v17h-6' fill='none' stroke={L} strokeWidth='2' strokeDasharray='3 2' />
			<circle cx='13' cy='10' r='5.500' fill='none' stroke={T} strokeWidth='2.400' />
			<path d='M9 14l-7 8' stroke={T} strokeWidth='3' />
		</g>
	),
	pan: (
		<g>
			<path d='M8 23l-6-9 2-1 3 3V5h2v7h1V2h2v10h1V3h2v9h1V6h2v10l-3 7z' fill={L} />
			{corner}
		</g>
	),
	orbit: (
		<g>
			<circle cx='12' cy='11' r='8' fill={L} />
			<path d='M7 4l5 8V3z' fill={T} />
			<path d='M3 20C0 22 2 14 10 8s14-8 12-4-4 8-9 12' fill='none' stroke='#444' strokeWidth='4' />
			<path d='M3 20C0 22 2 14 10 8s14-8 12-4-4 8-9 12' fill='none' stroke={L} strokeWidth='1.800' />
			{corner}
		</g>
	),
	maximize: (
		<g>
			<path d='M1 1h22v22H1z' fill={L} />
			<path d='M2 13h9v9M12 12l8-8m-7-1h8v8' fill='none' stroke='#444' strokeWidth='2.200' />
		</g>
	),

	/* windows taskbar */
	windows: <path d='M1 4l9-1.500V11H1zM11.500 2.200L23 .5V11H11.500zM1 12.500h9V21L1 19.500zM11.500 12.500H23V23l-11.500-1.700z' fill='#fff' />,
	search: (
		<g fill='none' stroke='#fff' strokeWidth='1.800'>
			<circle cx='15' cy='9' r='7' />
			<path d='M10 14l-9 9' />
		</g>
	),
	cortana: <circle cx='12' cy='12' r='9.500' fill='none' stroke='#fff' strokeWidth='2.800' />,
	taskView: <path d='M1 1v3h15V1M1 8h15v9H1zM1 24v-4h15v4M21 0v6M21 12v12M20 9h3' fill='none' stroke='#fff' strokeWidth='2' />,
	alice: (
		<g>
			<circle cx='12' cy='12' r='12' fill='#8d4ef5' />
			<path d='M0 12a12 12 0 0 0 24 0c-6 7-18 7-24 0z' fill='#a45afa' />
			<path d='M12 6c3 4 6 7 6 9 0 3-12 3-12 0 0-2 3-5 6-9z' fill='#fff' />
		</g>
	),
	folder: (
		<g>
			<path d='M1 2h9l2 3h11v16H1z' fill='#f7b81f' />
			<path d='M1 6h22v15H1z' fill='#fcd462' />
			<path d='M5 22v-9h14v9h-4v-4H9v4z' fill='#3b97e0' />
		</g>
	),
	chrome: (
		<g>
			<circle cx='12' cy='12' r='11.500' fill='#dd4b3c' />
			<path d='M12 12L2 6a11.500 11.500 0 0 0 9 17.500z' fill='#33a457' />
			<path d='M12 12l-1 11.500A11.500 11.500 0 0 0 23 8H12z' fill='#fcd03c' />
			<circle cx='12' cy='12' r='5.500' fill='#fff' />
			<circle cx='12' cy='12' r='4.300' fill='#4a8af4' />
		</g>
	),
	ps: (
		<g>
			<path d='M1.500 1.500h21v21h-21z' fill='#001d2c' stroke='#00b8f5' strokeWidth='1.600' />
			<text x='12' y='17' fontSize='13' fontWeight='bold' textAnchor='middle' fontFamily='Liberation Sans, sans-serif' fill='#00b8f5'>Ps</text>
		</g>
	),
	max: (
		<g>
			<path d='M0 0h24v24H0z' fill='#d5eaea' />
			<text x='11.500' y='15' fontSize='17' fontWeight='bold' textAnchor='middle' fontFamily='Liberation Sans, sans-serif' fill='#0e7f86'>3</text>
			<text x='23' y='23' fontSize='5' fontWeight='bold' textAnchor='end' fontFamily='Liberation Sans, sans-serif' fill='#0ea0a6'>MAX</text>
		</g>
	),
	appMax: (
		<g>
			<path d='M0 0h24v24H0z' fill='#d5eaea' />
			<text x='12' y='18' fontSize='20' fontWeight='bold' textAnchor='middle' fontFamily='Liberation Sans, sans-serif' fill='#0e7f86'>3</text>
			<path d='M13 22h9' stroke='#0ea0a6' strokeWidth='2' />
		</g>
	),
	paint: (
		<g>
			<path d='M11 3c7-1 12 5 10 11-1 5-5 9-9 9-3 0-1-4-4-5s-7 0-7-4C1 8 5 4 11 3z' fill='#cfe3f2' stroke='#8fb2cc' />
			<circle cx='6' cy='12' r='2' fill='#e0433a' /><circle cx='10' cy='8' r='2' fill='#f5b921' /><circle cx='15' cy='8' r='2' fill='#48b14c' />
			<circle cx='11' cy='14' r='1.800' fill='#333' />
			<path d='M21 1l2 2-8 20-2-1z' fill='#d5852f' />
			<path d='M19 0l5 2-2 5-3-2z' fill='#b98552' />
		</g>
	),
	chevronUp: <path d='M2 17l10-10 10 10' fill='none' stroke='#fff' strokeWidth='2.400' />,
	mic: (
		<g>
			<rect x='7' y='0' width='10' height='16' rx='3' fill='#fff' />
			<path d='M4 12c0 9 16 9 16 0M12 18v5M7 23h10' fill='none' stroke='#fff' strokeWidth='2' />
		</g>
	),
	update: (
		<g>
			<path d='M2 4l20-3v20H2z' fill='none' stroke='#fff' strokeWidth='2' />
			<path d='M7 11c1-5 7-5 9-2M16 5v4h-4M16 13c-1 4-7 5-9 2M7 19v-4h4' fill='none' stroke='#fff' strokeWidth='1.600' />
			<circle cx='19' cy='19' r='5' fill='#ff9800' />
		</g>
	),
	battery: (
		<g>
			<path d='M7 7h15v12H4v-5' fill='none' stroke='#fff' strokeWidth='1.800' />
			<path d='M9 10h11v6H9zM22 11h2v4h-2zM1 5h6v5H1zM2 2v3M6 2v3M4 10v5' fill='#fff' stroke='#fff' />
		</g>
	),
	wifi: <path d='M2 23C3 11 11 4 22 3M7 23c1-8 6-14 15-15M12 23c0-5 4-10 10-10M17 23c0-3 2-5 5-5' fill='none' stroke='#e8e8e8' strokeWidth='1.800' />,
	volume: <path d='M1 9h4l5-5v16l-5-5H1zM13 9c2 2 2 4 0 6M16 6c4 4 4 8 0 12M19 3c6 6 6 12 0 18' fill='none' stroke='#fff' strokeWidth='1.800' />,
	notify: (
		<g>
			<path d='M1 1h22v17h-9l-5 5v-5H1z' fill='#fff' />
			<path d='M5 6h14M5 10h14M5 14h10' stroke='#1b2742' strokeWidth='1.600' />
		</g>
	),
	user: <path d='M12 1c5 0 5 4 4 8s-2 5 0 7 6 2 7 6H1c1-4 5-4 7-6s1-3 0-7-1-8 4-8z' fill='#fff' stroke='#333' strokeWidth='1.600' />,
	minimize: <path d='M1 12h22' stroke='#000' strokeWidth='2' />,
	restore: <path d='M2 7h14v15H2zM7 6V2h14v16h-4' fill='none' stroke='#000' strokeWidth='2.400' />,
	close: <path d='M1 1l22 22M23 1L1 23' stroke='#000' strokeWidth='2' />,
	miniCurve: (
		<g fill='none' strokeWidth='2'>
			<path d='M2 1v22' stroke={L} strokeWidth='4' strokeDasharray='2 2' />
			<path d='M8 16C11-4 14 3 16 13s4 12 7 2' stroke={T} />
		</g>
	)
};

const Icon = ({ name, size = 24, box = 24 }) => (
	<svg width={size} height={size} viewBox={`0 0 ${box} ${box}`} aria-hidden='true'>
		{icons[name]}
	</svg>
);

/* ---------- shared parts ---------- */

const Page = styled.div`
	display: flex;
	flex-direction: column;
	min-height: 100vh;
	overflow: hidden;
`;

const VHandle = styled.div`
	width: 4px;
	height: ${(p) => (p.$height ? `${p.$height}px` : 'auto')};
	margin: ${(p) => p.$margin || '3px 0'};
	flex: none;
	border: 0 dotted #9c9c9c;
	border-width: 0 1px;
`;

const HHandle = styled.div`
	height: 3px;
	margin: ${(p) => p.$margin || '0'};
	flex: none;
	border: 0 dotted #9c9c9c;
	border-width: 1px 0;
`;

const Spacer = styled.div`
	flex: 1;
`;

const SelectBox = styled.div`
	position: relative;
	flex: none;
	width: ${(p) => p.$width}px;
	height: ${(p) => p.$height || 20}px;
	margin: 0 1px;
	background: #646464;
	color: #dcdcdc;

	select {
		appearance: none;
		width: 100%;
		height: 100%;
		padding: 0 18px 0 5px;
		outline: 0;
		overflow: hidden;
	}

	&::after {
		content: '';
		position: absolute;
		top: calc(50% - 3px);
		right: 7px;
		border: 3px solid transparent;
		border-top: 5px solid #dcdcdc;
		border-bottom: 0;
		pointer-events: none;
	}
`;

const Select = ({ label, value, ...rest }) => (
	<SelectBox {...rest}>
		<select aria-label={label} defaultValue={value}>
			<option>{value}</option>
		</select>
	</SelectBox>
);

/* ---------- title and menu ---------- */

const TitleBar = styled.header`
	display: flex;
	align-items: center;
	height: 23px;
	padding: 0 3px;
	background: #fff;
	color: #000;
	font: 12px ${segoe};
`;

const AppBadge = styled.span`
	display: grid;
	place-items: center;
	width: 16px;
	height: 16px;
	margin-right: 4px;
`;

const WindowButton = styled.button`
	display: grid;
	place-items: center;
	width: 46px;
	height: 22px;
`;

const MenuBar = styled.nav`
	display: flex;
	height: 23px;
	background: linear-gradient(#575757, #484848);
	border-bottom: 1px solid #111;
	font: 12px ${segoe};
`;

const MenuItem = styled.button`
	padding: 0 12px 2px;
	color: #eee;
`;

const SignIn = styled.button`
	display: flex;
	align-items: center;
	gap: 6px;
	width: 120px;
	padding: 0 4px;
	background: #cdcdcd;
	color: #222;
`;

const Triangle = styled.span`
	width: 0;
	height: 0;
	border: ${(p) => p.$size || 3}px solid transparent;
	border-top: ${(p) => (p.$size || 3) + 1}px solid ${(p) => p.$color || '#c8c8c8'};
	border-bottom: 0;
`;

const Workspaces = styled.label`
	display: flex;
	align-items: center;
	padding-left: 20px;
	gap: 2px;
	font: 11px ${tahoma};
`;

const menus = [
	'File', 'Edit', 'Tools', 'Group', 'Views', 'Create', 'Modifiers', 'Animation', 'Graph Editors',
	'Rendering', 'Civil View', 'Customize', 'Scripting', 'Interactive', 'Content', 'Arnold', 'Corona', 'Help'
];

function Header() {
	return (
		<>
			<TitleBar>
				<AppBadge><Icon name='appMax' size={16} /></AppBadge>
				<span>Apl_siemens_2.max - Autodesk 3ds Max 2019</span>
				<Spacer />
				<WindowButton aria-label='Minimize'><Icon name='minimize' size={11} /></WindowButton>
				<WindowButton aria-label='Restore'><Icon name='restore' size={11} /></WindowButton>
				<WindowButton aria-label='Close'><Icon name='close' size={11} /></WindowButton>
			</TitleBar>
			<MenuBar>
				{menus.map((m) => <MenuItem key={m}>{m}</MenuItem>)}
				<Spacer />
				<SignIn>
					<Icon name='user' size={17} />
					Sign In
					<Spacer />
					<Triangle $size={5} $color='#111' />
				</SignIn>
				<Workspaces>
					Workspaces:
					<Select label='Workspaces' value='Default' $width={136} $height={21} />
				</Workspaces>
			</MenuBar>
		</>
	);
}

/* ---------- main toolbar ---------- */

const Toolbar = styled.div`
	display: flex;
	align-items: center;
	height: 33px;
	padding: 0 0 1px 3px;

	${SelectBox} { margin-bottom: 4px; }
`;

const ToolButton = styled.button`
	display: grid;
	place-items: center;
	flex: none;
	width: 32px;
	height: 32px;

	span {
		display: grid;
		place-items: center;
		width: 30px;
		height: 29px;
		border-radius: 3px;
		background: ${(p) => (p.$on ? B : 'transparent')};
	}
`;

const Divider = styled.i`
	flex: none;
	width: 2px;
	height: ${(p) => p.$height || 16}px;
	margin: 0 2px;
	background: #1c1c1c;
`;

const ScriptButton = styled.button`
	width: 70px;
	overflow: hidden;
	white-space: nowrap;
	text-align: left;
`;

const tools = [
	'undo', 'redo', '|', 'link', 'unlink', 'bind', '|', ['All', 68],
	'select', 'byName', 'rectRegion', 'crossing', '|', 'move', 'rotate', 'scale', 'place', ['View', 68],
	'pivot', '|', 'manipulate', 'keyboard', '|', 'snap', 'angle', 'percent', 'spinner', '|', 'braces',
	['Create Selection Set', 118], '|', 'mirror', 'align', '|', 'explorer', 'layers', '|',
	'ribbon', 'curve', 'schematic', '|', 'material', '|',
	'renderSetup', 'renderFrame', 'renderProd', 'renderCloud', 'gallery'
];
const toolsOn = ['move', 'keyboard', 'ribbon'];

function MainToolbar() {
	return (
		<Toolbar>
			<VHandle $margin='0 2px 0 0' $height={27} />
			{tools.map((t, i) => {
				if (t === '|') return <Divider key={i} />;
				if (Array.isArray(t)) return <Select key={i} label={t[0]} value={t[0]} $width={t[1]} />;
				return (
					<ToolButton key={i} aria-label={t} $on={toolsOn.includes(t)}>
						<span><Icon name={t} /></span>
					</ToolButton>
				);
			})}
			<ScriptButton>Cleaner 1.0 by</ScriptButton>
		</Toolbar>
	);
}

/* ---------- left dock ---------- */

const Dock = styled.aside`
	display: flex;
	flex: none;
	width: 68px;
	padding-top: 3px;
`;

const DockColumn = styled.div`
	display: flex;
	flex-direction: column;
	width: 34px;
	padding: 0 3px;
`;

const DockButton = styled.button`
	display: grid;
	place-items: center;
	height: 31px;
`;

const DockLine = styled.hr`
	width: 28px;
	margin: 3px 0 4px 2px;
	border: 0;
	border-top: 1px solid #101010;
`;

const dockLeft = [
	'teapotBlue', 'vfb', 'dialog', 'mixer', '|', 'lightLister', '|', 'cameraGrey', 'cameraHalf', 'cameraRed', '|',
	'lightRect', 'lightDome', 'lightSphere', 'teapotMesh', 'lightSpot', 'sunYellow', 'halo', '|',
	'particles', 'metaballs', 'lattice', 'fur', 'grass', 'hair', 'ornatrix', '|',
	'sphere', 'matConvert', 'regionSphere', '|', 'transfer', 'help'
];
const dockRight = [
	'bulb', 'sun', 'cameraTeal', 'trees', 'lister', 'treeHalf', 'treeCard', 'ringSplash', 'sphereStack',
	'gridPlay', 'panelPlay', 'cameraPlus', 'panel', 'teapotHalf', 'bulbDots'
];

function LeftDock() {
	return (
		<Dock>
			{[dockLeft, dockRight].map((list, n) => (
				<DockColumn key={n}>
					<HHandle $margin='0 1px 2px' />
					{list.map((name, i) =>
						name === '|' ? (
							<DockLine key={i} />
						) : (
							<DockButton key={i} aria-label={name}><Icon name={name} /></DockButton>
						)
					)}
				</DockColumn>
			))}
		</Dock>
	);
}

/* ---------- ribbon ---------- */

const RibbonRow = styled.div`
	display: flex;
	padding-left: 2px;
`;

const RibbonBox = styled.section`
	flex: 1;
	margin-left: 3px;
	border-top: 1px solid #686868;
	border-bottom: 2px solid #2c2c2c;
	background: linear-gradient(#484848, #363636);
	font: 12px ${segoe};
`;

const Tabs = styled.div`
	display: flex;
	align-items: stretch;
	height: 20px;
	padding: 2px 0 0 5px;
	background: #515151;
	border-bottom: 1px solid #2f2f2f;
`;

const Tab = styled.button`
	padding: 0 20px 4px;
	color: #a3a3a3;
	${(p) =>
		p.$on &&
		css`
			padding: 0 7px 4px 19px;
			margin-right: 2px;
			color: #c4c4c4;
			background: linear-gradient(#6a6a6a, #5a5a5a);
			border: 1px solid #333;
			border-bottom: 0;
		`}
`;

const TabToggle = styled.button`
	display: flex;
	align-items: center;
	gap: 6px;
	margin-left: 10px;
	padding-bottom: 2px;

	i {
		display: grid;
		place-items: center;
		width: 14px;
		height: 8px;
		border-radius: 2px;
		background: #e0e0e0;
	}
	i::before {
		content: '';
		border: 3px solid transparent;
		border-bottom: 4px solid #333;
		border-top: 0;
	}
`;

const Panels = styled.div`
	display: flex;
`;

const Panel = styled.div`
	display: flex;
	flex-direction: column;
	flex: none;
	width: ${(p) => p.$width}px;
	background: #5a5a5a;
	border-right: 1px solid #3c3c3c;
`;

const PanelBody = styled.div`
	display: flex;
	height: 80px;
	padding: 4px 3px;
`;

const PanelTitle = styled.button`
	display: flex;
	align-items: center;
	justify-content: center;
	gap: 5px;
	height: 17px;
	margin: 0 1px;
	padding-bottom: 2px;
	background: linear-gradient(#4a4a4a, #424242);
	color: #e2e2e2;
`;

const Col = styled.div`
	display: flex;
	flex-direction: column;
	justify-content: ${(p) => (p.$center ? 'center' : 'flex-start')};
	align-items: ${(p) => p.$align || 'flex-start'};
	width: ${(p) => (p.$width ? `${p.$width}px` : 'auto')};
	padding-left: ${(p) => p.$pad || 0}px;
	flex: none;
`;

const Line = styled.div`
	display: flex;
	align-items: center;
	gap: ${(p) => p.$gap || 0}px;
	height: 24px;
	white-space: nowrap;
	color: ${(p) => (p.$lit ? '#e4e4e4' : '#3b3b3b')};
`;

const Rule = styled.i`
	flex: none;
	width: 2px;
	margin: 1px 0;
	border-left: 1px solid #3d3d3d;
	border-right: 1px solid #626262;
`;

const RButton = styled.button`
	display: grid;
	place-items: center;
	width: ${(p) => p.$width || 24}px;
	height: 22px;
	border: 1px solid #3b3b3b;
	margin-right: ${(p) => (p.$joined ? -1 : 0)}px;
	background: ${(p) => (p.$on ? 'linear-gradient(#5579b0, #7a9ccb)' : 'linear-gradient(#686868, #575757)')};
	color: #7a7a7a;
	font-weight: bold;
	font-size: 14px;
	line-height: 1;
`;

const LabelButton = styled.button`
	display: flex;
	align-items: center;
	gap: 5px;
	height: 24px;
	width: ${(p) => (p.$width ? `${p.$width}px` : 'auto')};
	color: ${(p) => (p.$lit ? '#e4e4e4' : '#3b3b3b')};
	white-space: nowrap;
`;

const Counter = styled.div`
	display: flex;
	width: 36px;
	height: 17px;
	border: 1px solid #3b3b3b;
	background: #4c4c4c;
	color: #ccc;

	input {
		width: 22px;
		padding-left: 3px;
	}
`;

const UpDown = styled.span`
	display: flex;
	flex-direction: column;
	justify-content: center;
	align-items: center;
	gap: 3px;
	width: 12px;
	flex: none;

	&::before, &::after {
		content: '';
		border: 3px solid transparent;
	}
	&::before { border-bottom: 4px solid #d2d2d2; border-top: 0; }
	&::after { border-top: 4px solid #d2d2d2; border-bottom: 0; }
`;

const MakePlanar = styled.button`
	display: flex;
	flex-direction: column;
	align-items: center;
	width: 46px;
	color: #3b3b3b;
	line-height: 15px;
`;

const Tool = ({ icon, children, arrow, ...rest }) => (
	<LabelButton {...rest}>
		<Icon name={icon} size={16} />
		{children}
		{arrow && <Triangle />}
	</LabelButton>
);

const RTool = ({ name, size = 18, ...rest }) => (
	<RButton aria-label={name} {...rest}><Icon name={name} size={size} /></RButton>
);

function Ribbon() {
	return (
		<RibbonRow>
			<VHandle />
			<RibbonBox>
				<Tabs>
					<Tab $on>Modeling</Tab>
					<Tab>Freeform</Tab>
					<Tab>Selection</Tab>
					<Tab>Object Paint</Tab>
					<Tab>Populate</Tab>
					<TabToggle aria-label='Minimize ribbon'><i /><Triangle /></TabToggle>
				</Tabs>
				<Panels>
					<Panel $width={225}>
						<PanelBody>
							<Col $width={154} $pad={3}>
								<Line>
									{['vertex', 'edge', 'border', 'polygon', 'element'].map((n) => (
										<RTool key={n} name={n} $width={30} size={16} $joined />
									))}
								</Line>
								<Col $width={148} $align='center'><Line $lit>Modify Mode</Line></Col>
								<Line $gap={4}>
									<Line>
										<RTool name='cube' $width={25} $joined />
										<RTool name='cube' $width={25} $joined />
										<RTool name='cube' $width={24} />
									</Line>
									<RTool name='cubeWire' $width={24} />
									<RTool name='soft' $width={40} />
								</Line>
							</Col>
							<Rule />
							<Col $pad={6} $center>
								<Line><RTool name='stackUp' /></Line>
								<Line><RTool name='stackDown' /></Line>
							</Col>
							<Col $pad={4}>
								<Line><RTool name='showEnd' size={16} $on /></Line>
								<Line><RTool name='pin' size={16} /></Line>
								<Line><RTool name='preview' size={16} $on /></Line>
							</Col>
						</PanelBody>
						<PanelTitle>Polygon Modeling <Triangle $size={4} /></PanelTitle>
					</Panel>

					<Panel $width={229}>
						<PanelBody>
							<Col $width={66} $pad={5} $center>
								<Tool icon='grow'>Grow</Tool>
								<Tool icon='shrink'>Shrink</Tool>
							</Col>
							<Col $width={76} $pad={3}>
								<Line><Col $pad={4}><Tool icon='loop' arrow>Loop</Tool></Col></Line>
								<Line>
									<RTool name='plus' $width={34} $joined />
									<RTool name='minus' $width={34} />
								</Line>
								<Line>
									<RTool name='dots' $width={31} $joined />
									<RTool name='loopGreen' $width={25} $joined />
									<RButton $width={13} aria-label='Loop mode'><Triangle /></RButton>
								</Line>
							</Col>
							<Rule />
							<Col $pad={7}>
								<Line><Col $pad={8}><Tool icon='ring'>Ring</Tool></Col></Line>
								<Line>
									<RTool name='plus' $width={31} $joined />
									<RTool name='minus' $width={31} />
								</Line>
								<Line>
									<RTool name='dots' $width={31} $joined />
									<RTool name='ring' $width={31} />
								</Line>
							</Col>
						</PanelBody>
						<PanelTitle>Modify Selection <Triangle $size={4} /></PanelTitle>
					</Panel>

					<Panel $width={306}>
						<PanelBody>
							<Col $width={47} $pad={5} $center>
								<Line>
									<RTool name='gridLock' $width={24} $joined />
									<RButton $width={13} aria-label='Preserve UVs settings'><Triangle /></RButton>
								</Line>
								<Line><RTool name='gridBrush' $width={36} /></Line>
								<Counter>
									<input aria-label='Iterations' defaultValue='1' />
									<UpDown />
								</Counter>
							</Col>
							<Rule />
							<Col $pad={7}>
								<Line>
									<Tool icon='repeat' $width={75}>Repeat</Tool>
									<Tool icon='knife' $width={70}>QSlice</Tool>
									<Tool icon='swift'>Swift Loop</Tool>
								</Line>
								<Line>
									<Tool icon='nurms' $width={79}>NURMS</Tool>
									<Tool icon='scissors' $width={66}>Cut</Tool>
									<Tool icon='pconnect' arrow>P Connect</Tool>
								</Line>
								<Col $pad={13}>
									<Line $lit $gap={4}>
										Constraints:
										<Line>
											<RTool name='constraintNone' $width={27} size={17} $joined $on />
											<RTool name='constraintEdge' $width={27} size={17} $joined />
											<RTool name='constraintFace' $width={27} size={17} $joined />
											<RTool name='constraintNormal' $width={26} size={17} />
										</Line>
									</Line>
								</Col>
							</Col>
						</PanelBody>
						<PanelTitle>Edit</PanelTitle>
					</Panel>

					<Panel $width={163}>
						<PanelBody>
							<Col $pad={5}>
								<Line>
									<Tool icon='relax' $width={82} arrow>Relax</Tool>
									<Tool icon='create'>Create</Tool>
								</Line>
								<Tool icon='attach' arrow>Attach</Tool>
							</Col>
						</PanelBody>
						<PanelTitle>Geometry (All) <Triangle $size={4} /></PanelTitle>
					</Panel>

					<Panel $width={105}>
						<PanelBody>
							<Col $pad={4}>
								<Tool icon='msmooth' $lit arrow>MSmooth</Tool>
								<Tool icon='tessellate' $lit arrow>Tessellate</Tool>
								<Tool icon='displace' $lit>Use Displac...</Tool>
							</Col>
						</PanelBody>
						<PanelTitle>Subdivision</PanelTitle>
					</Panel>

					<Panel $width={134}>
						<PanelBody>
							<MakePlanar>
								<svg width='30' height='38' viewBox='0 0 30 38'>
									<path d='M9 14l9-10v23l-9 8z' fill='#858585' />
									<path d='M0 19h9M19 19h11M18 15l-5 4 5 4z' fill='#444' stroke='#858585' strokeWidth='1.500' />
								</svg>
								Make<br />Planar
							</MakePlanar>
							<Rule />
							<Col $pad={10}>
								<Col $pad={4}><Tool icon='toView'>To View</Tool></Col>
								<Col $pad={4}><Tool icon='toGrid'>To Grid</Tool></Col>
								<Line>
									<RButton $width={25} $joined>X</RButton>
									<RButton $width={25} $joined>Y</RButton>
									<RButton $width={24}>Z</RButton>
								</Line>
							</Col>
						</PanelBody>
						<PanelTitle>Align</PanelTitle>
					</Panel>

					<Panel $width={93}>
						<PanelBody>
							<Col $pad={5}>
								<Tool icon='hard'>Hard</Tool>
								<Tool icon='smooth'>Smooth</Tool>
								<Tool icon='smooth30'>Smooth 30</Tool>
							</Col>
						</PanelBody>
						<PanelTitle>Properties <Triangle $size={4} /></PanelTitle>
					</Panel>
				</Panels>
			</RibbonBox>
		</RibbonRow>
	);
}

/* ---------- viewport ---------- */

const Viewport = styled.main`
	position: relative;
	display: flex;
	flex: 1;
	min-width: 0;
	border: 2px solid #7a6828;
	background: #5b5c60;

	> svg {
		flex: 1;
		min-width: 0;
	}
`;

const ViewportLabels = styled.div`
	position: absolute;
	top: 7px;
	left: 3px;
	display: flex;
	gap: 3px;

	button {
		color: #dcdcdc;
		text-shadow: 1px 1px #333;
		white-space: pre;
	}
	button:last-child { margin-left: 2px; }
`;

/* the scene is drawn in window coordinates, the viewBox cuts out the viewport */
function Scene() {
	return (
		<Viewport>
			<svg viewBox='70 205 1423 725' preserveAspectRatio='xMidYMid meet'>
				<path d='M725.500 420L1082 414v229l-356.500 6z' fill='#000' stroke='#fff' strokeWidth='1.600' />
				<path d='M725 420v229M1082 414v229' stroke='#fff' strokeWidth='2' />
				<g fill='none' stroke='#111612' strokeWidth='1'>
					<path d='M961 432.500l92-1v167l-92 1.500z' />
					<path d='M792.500 440v20M792.500 484v20M759 472h20M804 471.500h21M792.500 552v8M792.500 584v28M752 572h28M804 571h28' />
					<path d='M890 452v41M890 518v41M837 506.500h42M904 505.500h38M1007 474v84' />
				</g>
				<g filter='url(#soft)'>
					<path d='M875 626h14M892 626h8M902 626h6M911 625.500h5M917 625.500h4M928 625h4' stroke='#8d8d8d' strokeWidth='5' strokeDasharray='4 1' />
					<path d='M900 619.500h6' stroke='#999' strokeWidth='4' />
					<path d='M903 611v5M883 622v7M892 623v5M919 618.500v4M924 622v6M933.500 622v6M940 622v6M867 628v3' stroke='#8a1014' strokeWidth='2.600' />
					<path d='M934 624h6M936 620h5' stroke='#7a1014' strokeWidth='2' />
					<path d='M909.500 613.500v5' stroke='#777' strokeWidth='3' />
					<path d='M865 633.500h5M874 633.500h60M937 632.500h4' stroke='#777' strokeWidth='4' strokeDasharray='2 1' />
					<path d='M895 605.500h16' stroke='#888' strokeWidth='3' />
					<path d='M893 641h21' stroke='#c0c0c0' strokeWidth='4' />
					<path d='M1067 419h11M1067 423h6' stroke='#1c1c1c' strokeWidth='2' />
				</g>
				<path d='M725.500 633L1082 627' stroke='#fff' strokeWidth='2' />
				<defs>
					<filter id='soft'><feGaussianBlur stdDeviation='.8' /></filter>
				</defs>
				<path d='M70 435L808.500 537' stroke='#4aa8ec' strokeWidth='1.200' />
				<path d='M800.500 528.500h16v16h-16zM802 545.500h16.500v-16' fill='none' stroke='#5b7fdc' />

				<circle cx='916' cy='542.500' r='5' fill='#034203' />
				<g fill='none'>
					<path d='M903.500 507.500V440M903.500 491.500l40-1M903.500 491.500l6 5' stroke='#0000c0' />
					<path d='M943.500 491v40l5.500 4.500M928 531.500l63-1' stroke='#c40000' />
					<path d='M909.500 496v40.500l39.500-1' stroke='#00a000' />
					<path d='M894.500 522.500h17v17h-17z' stroke='#b4b4b4' />
					<path d='M907 534l9 8' stroke='#f2f200' strokeWidth='1.300' />
				</g>
				<path d='M903.500 412l6 31h-12z' fill='#0000c0' />
				<path d='M1024 529.500l-33-5v11z' fill='#c80000' />
				<g fontFamily={tahoma} fontSize='11'>
					<text x='902' y='411' fill='#0000c0' stroke='#0000c0' strokeWidth='.4'>z</text>
					<text x='1025' y='530' fill='#c00000' stroke='#c00000' strokeWidth='.4'>x</text>
					<text x='920' y='546' fill='#e8e800' stroke='#e8e800' strokeWidth='.4'>y</text>
				</g>

				<path d='M94.500 880v24.500' stroke='#0000c0' />
				<path d='M94 904.500h26' stroke='#c00000' />
				<g fontFamily={tahoma} fontSize='10' fontWeight='bold'>
					<text x='95' y='880' fill='#0000c0'>z</text>
					<text x='120' y='906' fill='#a01010'>x</text>
					<text x='98' y='907' fill='#128012'>y</text>
				</g>

				<path d='M1401 275.500h14M1417 275h42M1462 275.500h13' stroke='#8f969c' strokeWidth='1.400' />
				<rect x='1422' y='243' width='31' height='31' rx='2' fill='#9a9b9c' />
				<path d='M1427 248h20v19h-20z' fill='#8c8e91' />
				<text x='1437' y='261' fontSize='8' fontWeight='bold' textAnchor='middle' fontFamily={tahoma} fill='#6c7076'>FRONT</text>
			</svg>
			<ViewportLabels>
				<button>[+ ]</button>
				<button>[Orthographic ]</button>
				<button>[Standard ]</button>
				<button>[Edged Faces ]</button>
				<button>&lt;&lt;Disabled&gt;&gt;</button>
			</ViewportLabels>
		</Viewport>
	);
}

/* ---------- command panel ---------- */

const Workspace = styled.div`
	display: flex;
	flex: 1;
	margin-top: 4px;
`;

const CommandPanel = styled.aside`
	display: flex;
	flex-direction: column;
	flex: none;
	width: 425px;
	padding: 2px 1px 0 4px;
`;

const CommandFrame = styled.div`
	position: relative;
	display: flex;
	flex-direction: column;
	flex: 1;
	border: 1px solid #3a3a3a;
	border-top: 0;
	border-radius: 4px;
`;

const CommandTabs = styled.div`
	display: flex;
	gap: 1px;
	margin-top: 4px;
	border-bottom: 1px solid #3a3a3a;
`;

const CommandTab = styled.button`
	display: grid;
	place-items: center;
	width: 31px;
	height: 27px;
	margin-bottom: -1px;
	border: 1px solid #3a3a3a;
	border-bottom-color: ${(p) => (p.$on ? '#444' : '#3a3a3a')};
	border-radius: 4px 4px 0 0;
	background: ${(p) => (p.$on ? '#444' : '#3a3a3a')};
`;

const Categories = styled.div`
	display: flex;
	gap: 2px;
	padding: 5px 0 8px 5px;
`;

const Category = styled.button`
	display: grid;
	place-items: center;
	width: 20px;
	height: 20px;
	border-radius: 2px;
	background: ${(p) => (p.$on ? B : 'transparent')};
`;

const CategorySelect = styled.div`
	padding-left: 3px;
`;

const Scroller = styled.div`
	display: flex;
	flex: 1;
	width: 206px;
	margin: 4px 0 3px 4px;
`;

const Track = styled.div`
	width: 6px;
	margin-left: 3px;
	border-radius: 3px;
	background: #3c3c3c;
`;

const SideTrack = styled(Track)`
	position: absolute;
	top: 36px;
	right: 4px;
	bottom: 3px;
`;

const Rollouts = styled.div`
	display: flex;
	flex-direction: column;
	gap: 3px;
	width: 198px;
`;

const Rollout = styled.section`
	padding: 3px 8px ${(p) => p.$bottom || 4}px 6px;
	border: 1px solid #3c3c3c;
	border-radius: 3px;
	background: #515151;
`;

const RolloutHead = styled.button`
	display: flex;
	align-items: center;
	gap: 7px;
	width: 100%;
	height: 14px;
	color: #fff;
	font-weight: bold;

	&::after {
		content: '';
		width: 7px;
		height: 7px;
		margin: 0 0 3px auto;
		background: conic-gradient(at 1px 1px, transparent 75%, #9a9a9a 0) 0 0 / 3px 3px;
	}
`;

const AutoGrid = styled.label`
	display: flex;
	align-items: center;
	justify-content: center;
	gap: 2px;
	height: 23px;
	padding: 2px 36px 0 0;
	color: #888;

	input {
		appearance: none;
		width: 11px;
		height: 11px;
		border: 1px solid #484848;
		background: #575757;
	}
`;

const TypeGrid = styled.div`
	display: grid;
	grid-template-columns: 68px 68px;
	justify-content: center;
	gap: 4px 10px;
`;

const PlainButton = styled.button`
	display: grid;
	place-items: center;
	width: ${(p) => (p.$width ? `${p.$width}px` : 'auto')};
	height: ${(p) => p.$height || 17}px;
	border: 1px solid #505050;
	border-radius: 3px;
	background: #646464;
	color: #e0e0e0;
	white-space: nowrap;
`;

const NameRow = styled.div`
	display: flex;
	align-items: center;
	gap: 3px;
	padding: 9px 0 0 16px;

	input {
		width: 132px;
		height: 20px;
		padding: 0 4px;
		border: 1px solid #484848;
		background: #646464;
	}
	button {
		width: 18px;
		height: 20px;
		border: 1px solid #000;
		background: #fff;
	}
`;

const commandTabs = ['tabCreate', 'tabModify', 'tabHierarchy', 'tabMotion', 'tabDisplay', 'tabUtil'];
const categories = ['geo', 'shapes', 'lights', 'cams', 'helpers', 'warps', 'systems'];

function Command() {
	return (
		<CommandPanel>
			<HHandle $margin='0 0 0 2px' />
			<CommandFrame>
				<CommandTabs>
					{commandTabs.map((t, i) => (
						<CommandTab key={t} aria-label={t} $on={i === 0}><Icon name={t} size={17} /></CommandTab>
					))}
				</CommandTabs>
				<Categories>
					{categories.map((c) => (
						<Category key={c} aria-label={c} $on={c === 'cams'}><Icon name={c} size={15} /></Category>
					))}
				</Categories>
				<CategorySelect>
					<Select label='Category' value='Standard' $width={205} />
				</CategorySelect>
				<Scroller>
					<Rollouts>
						<Rollout>
							<RolloutHead><Triangle />Object Type</RolloutHead>
							<AutoGrid><input type='checkbox' disabled />AutoGrid</AutoGrid>
							<TypeGrid>
								<PlainButton>Physical</PlainButton>
								<PlainButton>Target</PlainButton>
								<PlainButton>Free</PlainButton>
								<PlainButton>CoronaCam</PlainButton>
							</TypeGrid>
						</Rollout>
						<Rollout $bottom={8}>
							<RolloutHead><Triangle />Name and Color</RolloutHead>
							<NameRow>
								<input aria-label='Object name' defaultValue='Siemens ED877FWB5E' />
								<button aria-label='Object color' />
							</NameRow>
						</Rollout>
					</Rollouts>
					<Track />
				</Scroller>
				<SideTrack />
			</CommandFrame>
		</CommandPanel>
	);
}

/* ---------- time line ---------- */

const TimeArea = styled.div`
	display: flex;
	padding-left: 2px;
`;

const TimeColumn = styled.div`
	flex: 1;
	min-width: 0;
	margin-left: 3px;
`;

const TimeSlider = styled.div`
	display: flex;
	align-items: center;
	gap: 2px;
	height: 25px;
	padding: 1px 0 0 1px;
`;

const TrackBar = styled.div`
	display: flex;
	height: 27px;
	border-top: 2px solid #121212;
`;

const TrackIcon = styled.button`
	display: grid;
	place-items: center;
	width: 48px;
	padding-right: 6px;
`;

const Frames = styled.ol`
	display: flex;
	flex: 1;
	margin: 0 48px 0 0;
	padding: 0;
	list-style: none;
	background: #282828;
	border-bottom: 1px solid #3a3a3a;
`;

const Frame = styled.li`
	display: flex;
	flex: 1 1 0;
	min-width: 0;
	justify-content: center;
	align-items: flex-end;
	color: #b8b8b8;
	line-height: 12px;
	background: linear-gradient(#8a8a8a, #8a8a8a) center top / 1px ${(p) => (p.$major ? '100%' : '11px')} no-repeat;

	span {
		flex: none;
	}
	&:first-child span {
		width: 8px;
		height: 24px;
		padding-top: 12px;
		text-align: center;
		background: #8a8430;
		color: #e8dc50;
	}
`;

function TimeLine() {
	return (
		<TimeArea>
			<VHandle $margin='6px 0 2px' />
			<TimeColumn>
				<TimeSlider>
					<PlainButton $width={15} aria-label='Previous frame'>&lt;</PlainButton>
					<PlainButton $width={122}>0 / 100</PlainButton>
					<PlainButton $width={15} aria-label='Next frame'>&gt;</PlainButton>
				</TimeSlider>
				<TrackBar>
					<TrackIcon aria-label='Mini curve editor'><Icon name='miniCurve' size={15} /></TrackIcon>
					<Frames>
						{Array.from({ length: 101 }, (_, i) => (
							<Frame key={i} $major={i % 5 === 0}>{i % 5 === 0 && <span>{i}</span>}</Frame>
						))}
					</Frames>
				</TrackBar>
			</TimeColumn>
		</TimeArea>
	);
}

/* ---------- status bar ---------- */

const StatusBar = styled.footer`
	display: flex;
	height: 56px;
	padding: 4px 11px 3px 4px;
	color: #f0f0f0;
`;

const Listener = styled.div`
	display: flex;
	flex-direction: column;
	width: 98px;
	margin-right: 5px;
	padding-top: 1px;

	input {
		height: 23px;
		padding: 0 4px 2px;
		border: 2px solid #e8e8e8;
		border-top-color: #9a9a9a;
		border-left-color: #9a9a9a;
		background: #fff;
		font: 12px 'Liberation Mono', monospace;
		color: #8a8a8a;
	}
	input:first-child { background: #dcc2c4; }
`;

const Prompt = styled.div`
	display: flex;
	flex-direction: column;
	padding: 1px 0 0 3px;
	white-space: pre;
	line-height: 25px;
`;

const StatusCol = styled.div`
	display: flex;
	flex-direction: column;
	justify-content: space-between;
	margin-left: ${(p) => p.$left || 0}px;
	padding: 3px 0 2px;
`;

const StatusRow = styled.div`
	display: flex;
	align-items: center;
	gap: ${(p) => p.$gap ?? 4}px;
	height: 20px;
	white-space: nowrap;
`;

const TagRow = styled(StatusRow)`
	align-self: flex-end;

	span { width: 76px; }
`;

const Coord = styled.label`
	display: flex;
	align-items: center;
	gap: 4px;
`;

const SpinBox = styled.span`
	display: flex;
	width: ${(p) => p.$width || 69}px;
	height: 18px;
	background: #646464;
	color: #dcdcdc;

	input {
		flex: 1;
		min-width: 0;
		padding-left: 3px;
		margin-right: 1px;
	}
`;

const IconButton = styled.button`
	display: grid;
	place-items: center;
	width: ${(p) => p.$width || 23}px;
	height: 20px;
	border-radius: 3px;
	background: ${(p) => (p.$on ? B : 'transparent')};
`;

const BigKey = styled(PlainButton)`
	width: 43px;
	height: 43px;
	margin: 3px 3px 0 9px;
`;

const NavGrid = styled.div`
	display: grid;
	grid-template-columns: repeat(4, 23px);
	align-content: space-between;
	margin-left: 8px;
	padding: 3px 0 4px;
`;

function Status() {
	return (
		<StatusBar>
			<Listener>
				<input aria-label='Macro recorder' readOnly />
				<input aria-label='Listener' defaultValue='MAXScript Mini Listener' />
			</Listener>
			<Divider $height={50} />
			<Prompt>
				<span>1 Object Selected</span>
				<span>{'Rendering Time  0:00:00'}</span>
			</Prompt>
			<Spacer />
			<StatusCol>
				<StatusRow $gap={2}>
					<IconButton $width={25} aria-label='Isolate'><Icon name='isolate' size={15} /></IconButton>
					<IconButton $width={25} aria-label='Lock'><Icon name='lock' size={14} /></IconButton>
					<IconButton $width={25} aria-label='Absolute mode'><Icon name='absolute' size={15} /></IconButton>
					<Coord>X:<SpinBox><input defaultValue='3974,668mm' /><UpDown /></SpinBox></Coord>
					<Coord>Y:<SpinBox><input defaultValue='-335,68mm' /><UpDown /></SpinBox></Coord>
					<Coord>Z:<SpinBox><input defaultValue='3594,044mm' /><UpDown /></SpinBox></Coord>
					<span>Grid = 100,0mm</span>
				</StatusRow>
				<TagRow>
					<Divider />
					<IconButton $width={21} $on aria-label='Time tags'><Icon name='timeTag' size={14} /></IconButton>
					<span>Add Time Tag</span>
				</TagRow>
			</StatusCol>
			<StatusCol $left={28}>
				<StatusRow $gap={0}>
					<IconButton $width={22} aria-label='Go to start'><Icon name='goStart' size={15} /></IconButton>
					<Divider />
					<IconButton $width={22} aria-label='Previous'><Icon name='prev' size={13} /></IconButton>
					<IconButton $width={22} aria-label='Play'><Icon name='play' size={14} /></IconButton>
					<IconButton $width={22} aria-label='Next'><Icon name='next' size={13} /></IconButton>
					<Divider />
					<IconButton $width={22} aria-label='Go to end'><Icon name='goEnd' size={15} /></IconButton>
				</StatusRow>
				<StatusRow $gap={0}>
					<IconButton $width={22} aria-label='Key mode'><Icon name='keyMode' size={12} /></IconButton>
					<Divider />
					<SpinBox $width={68}><input aria-label='Current frame' defaultValue='0' /><UpDown /></SpinBox>
					<Divider />
					<IconButton $width={22} aria-label='Time configuration'><Icon name='timeCfg' size={15} /></IconButton>
				</StatusRow>
			</StatusCol>
			<BigKey aria-label='Set keys'><Icon name='bigPlus' size={30} box={36} /></BigKey>
			<StatusCol>
				<PlainButton $width={48} $height={21}>Auto Key</PlainButton>
				<PlainButton $width={48} $height={21}>Set Key</PlainButton>
			</StatusCol>
			<StatusCol $left={3}>
				<Select label='Key set' value='Selected' $width={114} />
				<StatusRow $gap={6}>
					<IconButton $width={20} aria-label='Tangents'><Icon name='tangents' size={18} /></IconButton>
					<PlainButton $width={89} $height={20}>Key Filters...</PlainButton>
				</StatusRow>
			</StatusCol>
			<NavGrid>
				{['zoom', 'zoomAll', 'extents', 'extentsAll', 'zoomRegion', 'pan', 'orbit', 'maximize'].map((n) => (
					<IconButton key={n} aria-label={n}><Icon name={n} size={16} /></IconButton>
				))}
			</NavGrid>
		</StatusBar>
	);
}

/* ---------- taskbar ---------- */

const Taskbar = styled.footer`
	display: flex;
	align-items: center;
	height: 40px;
	background: linear-gradient(90deg, #243b46, #20333f 55%, #1b2b42 72%, #1a2542);
	color: #fff;
	font: 12px ${segoe};
`;

const TaskButton = styled.button`
	display: grid;
	place-items: center;
	width: 48px;
	height: 40px;
	margin-left: ${(p) => p.$gap || 0}px;
	background: ${(p) =>
		p.$open ? 'linear-gradient(#76b9ed, #76b9ed) center bottom / 40px 2px no-repeat' : 'none'};
	${(p) => p.$active && css`
		background: linear-gradient(#76b9ed, #76b9ed) center bottom / 48px 2px no-repeat #4f666e;
	`}
`;

const TrayButton = styled.button`
	display: grid;
	place-items: center;
	width: 24px;
	height: 40px;
`;

const Language = styled(TrayButton)`
	width: 35px;
`;

const Clock = styled.div`
	width: 70px;
	text-align: center;
	line-height: 18px;
`;

const Notify = styled.button`
	position: relative;
	display: grid;
	place-items: center;
	width: 34px;
	height: 40px;

	span {
		position: absolute;
		right: 2px;
		bottom: 4px;
		width: 16px;
		height: 16px;
		border: 1px solid #aaa;
		border-radius: 8px;
		background: #2a3038;
		line-height: 14px;
		font-size: 11px;
	}
`;

const DesktopEdge = styled.i`
	width: 4px;
	height: 40px;
	margin-left: 13px;
	border-left: 1px solid #7a8294;
`;

function WindowsBar() {
	return (
		<Taskbar>
			<TaskButton aria-label='Start'><Icon name='windows' size={17} /></TaskButton>
			<TaskButton aria-label='Search'><Icon name='search' size={17} /></TaskButton>
			<TaskButton aria-label='Cortana'><Icon name='cortana' size={18} /></TaskButton>
			<TaskButton aria-label='Task view'><Icon name='taskView' size={16} /></TaskButton>
			<TaskButton $gap={8} aria-label='Alice'><Icon name='alice' /></TaskButton>
			<TaskButton $gap={9} $open aria-label='Explorer'><Icon name='folder' size={22} /></TaskButton>
			<TaskButton $gap={1} $open aria-label='Chrome'><Icon name='chrome' size={23} /></TaskButton>
			<TaskButton $gap={1} $open aria-label='Photoshop'><Icon name='ps' size={22} /></TaskButton>
			<TaskButton $gap={1} $active aria-label='3ds Max'><Icon name='max' /></TaskButton>
			<TaskButton $gap={1} $open aria-label='Paint'><Icon name='paint' /></TaskButton>
			<Spacer />
			<TrayButton aria-label='Show hidden icons'><Icon name='chevronUp' size={13} /></TrayButton>
			<TrayButton aria-label='Microphone'><Icon name='mic' size={16} /></TrayButton>
			<TrayButton aria-label='Updates'><Icon name='update' size={16} /></TrayButton>
			<TrayButton aria-label='Battery'><Icon name='battery' size={16} /></TrayButton>
			<TrayButton aria-label='Network'><Icon name='wifi' size={14} /></TrayButton>
			<TrayButton aria-label='Volume'><Icon name='volume' size={16} /></TrayButton>
			<Language>ENG</Language>
			<Clock>16:42<br />12.12.2020</Clock>
			<Notify aria-label='Notifications'><Icon name='notify' size={17} /><span>2</span></Notify>
			<DesktopEdge />
		</Taskbar>
	);
}

const Body = styled.div`
	display: flex;
	flex: 1;
`;

const Main = styled.div`
	display: flex;
	flex-direction: column;
	flex: 1;
	min-width: 0;
`;

export default function App() {
	return (
		<Page>
			<GlobalStyle />
			<Header />
			<MainToolbar />
			<Body>
				<LeftDock />
				<Main>
					<Ribbon />
					<Workspace>
						<Scene />
						<Command />
					</Workspace>
					<TimeLine />
				</Main>
			</Body>
			<Status />
			<WindowsBar />
		</Page>
	);
}
